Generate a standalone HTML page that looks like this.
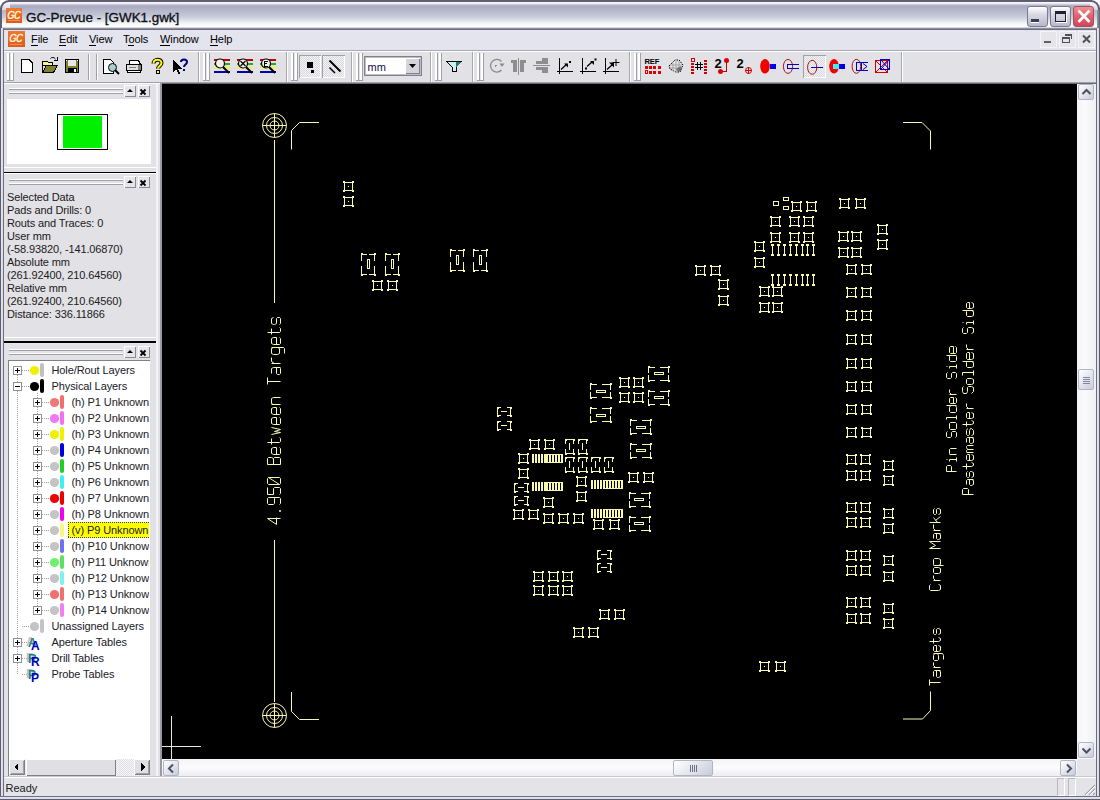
<!DOCTYPE html>
<html><head><meta charset="utf-8">
<style>
*{margin:0;padding:0;box-sizing:border-box}
html,body{width:1100px;height:800px;overflow:hidden;background:#E0DFE3;font-family:"Liberation Sans",sans-serif;font-size:11px;color:#000}
.a{position:absolute}
#title{left:0;top:0;width:1100px;height:30px;background:linear-gradient(#5F5E70 0,#5F5E70 1.5px,#F8F8FC 2px,#F8F8FC 3px,#D8D8E6 4px,#A8A8BE 6px,#B4B6CA 10px,#C4C8D8 16px,#DCDFE6 20px,#F0F4F2 23px,#FFFFFF 26px,#FFFFFF 27px,#B0B0C0 28px,#6E6E80 29px,#6E6E80 30px)}
#frameL{z-index:5;left:0;top:28px;width:4px;height:772px;background:linear-gradient(90deg,#5E5E72 0,#5E5E72 1px,#E6E6EE 1px,#D8D8E2 3px,#6E6E80 3px)}
#frameR{z-index:5;left:1096px;top:28px;width:4px;height:772px;background:linear-gradient(90deg,#6E6E80 0,#6E6E80 1px,#E6E6EE 1px,#D8D8E2 3px,#5E5E72 3px)}
#frameB{z-index:5;left:0;top:796px;width:1100px;height:4px;background:linear-gradient(#6E6E80 0,#6E6E80 1px,#E6E6EE 1px,#D8D8E2 3px,#5E5E72 3px)}
#menubar{left:4px;top:30px;width:1092px;height:20px;background:#E3E4EE}
.menu{top:33px;font-size:11px;color:#000;letter-spacing:-0.1px}
.menu u{text-decoration:none;border-bottom:1px solid #000}
#tbline{left:4px;top:50px;width:1092px;height:1px;background:#A8A8B4}
#tbwhite{left:4px;top:51px;width:1092px;height:1px;background:#FFFFFF}
#toolbar{left:4px;top:52px;width:1092px;height:30px;background:#E2E1E6}
#tbbottom{left:4px;top:82px;width:1092px;height:1px;background:#A0A0AC}
.grip{top:53px;width:7px;height:27px;border-left:1px solid #fff;border-right:1px solid #fff}
.grip:before{content:"";position:absolute;left:1px;top:0;width:1px;height:27px;background:#A8A8B0}
.grip:after{content:"";position:absolute;left:5px;top:0;width:1px;height:27px;background:#A8A8B0}
.tbend{top:53px;width:2px;height:28px;border-left:1px solid #B0B0B8;border-right:1px solid #fff}
#canvas{left:162px;top:84px;width:915px;height:675px;background:#000;overflow:hidden}
#status{left:4px;top:777px;width:1092px;height:20px;background:#E3E3E8;border-top:1px solid #FFFFFF}

.gc{background:linear-gradient(#F07830,#E05818);overflow:hidden}
.gc span{position:absolute;left:2px;top:0px;font:italic bold 12px "Liberation Sans",sans-serif;color:#FFF2D0;letter-spacing:-1px;transform:scaleX(0.8) skewX(-8deg);transform-origin:0 0}
.gc:after{content:"";position:absolute;left:2px;bottom:2px;width:12px;height:1px;background:#F09060}
.tbtn{width:21px;height:21px;border-radius:3px;border:1px solid #7A7A90;background:linear-gradient(#FFFFFF,#D8D8E4 40%,#B8B8CC)}
.close{background:linear-gradient(#F09090,#E06070 50%,#D04858);border-color:#A05060}
.mdib{top:31px;width:17px;height:17px;background:#E6E6EA;border:1px solid #F4F4F6}
.tr{font-size:11px;line-height:14px;color:#202028;white-space:nowrap;letter-spacing:-0.1px}
.sbtn{width:16px;height:16px;border:1px solid #B0B4C4;border-radius:2px;background:linear-gradient(135deg,#FFFFFF,#E4E6EE 50%,#C8CCDA)}
</style></head><body>
<div class="a" id="title"></div>
<div class="a" id="frameL"></div>
<div class="a" style="left:0;top:8px;width:2px;height:20px;background:#5F5E70"></div>
<div class="a" style="left:1097px;top:8px;width:3px;height:20px;background:linear-gradient(90deg,#9A9AAC,#5F5E70)"></div>
<div class="a" id="frameR"></div>
<div class="a" id="frameB"></div>
<div class="a" id="menubar"></div>
<div class="a" id="tbline"></div>
<div class="a" id="tbwhite"></div>
<div class="a" id="toolbar"></div>
<div class="a" id="tbbottom"></div>
<div class="a" style="left:160px;top:83px;width:936px;height:1px;background:#6A6A72"></div>
<div class="a" id="canvas"></div>
<!-- canvas -->
<div class="a" style="left:162px;top:84px;width:915px;height:675px;overflow:hidden"><div class="a" style="left:-162px;top:-84px;width:1100px;height:800px"><svg class="a" style="left:0;top:0" width="1100" height="800"><g fill="none" stroke="#F8F8B0" stroke-width="1.2" shape-rendering="crispEdges"><rect x="344.5" y="182.5" width="8" height="8"/>
<path d="M348 186h1.2v1.2h-1.2z" fill="#F8F8B0" stroke="none"/>
<path d="M343 181h2v2h-2zM352 181h2v2h-2zM343 190h2v2h-2zM352 190h2v2h-2z" fill="#F8F8B0" stroke="none"/>
<rect x="344.5" y="197.5" width="8" height="8"/>
<path d="M348 201h1.2v1.2h-1.2z" fill="#F8F8B0" stroke="none"/>
<path d="M343 196h2v2h-2zM352 196h2v2h-2zM343 205h2v2h-2zM352 205h2v2h-2z" fill="#F8F8B0" stroke="none"/>
<path d="M361.5 260.6V254.5H366.5M368.5 254.5H374.5V260.6M361.5 266.4V274.5H366.5M368.5 274.5H374.5V266.4"/>
<rect x="367.5" y="259.5" width="2" height="9"/>
<path d="M361 254h1.5M374 254h1.5M361 275h1.5M374 275h1.5" stroke-width="1.6"/>
<path d="M385.5 260.6V254.5H390.5M392.5 254.5H398.5V260.6M385.5 266.4V274.5H390.5M392.5 274.5H398.5V266.4"/>
<rect x="391.5" y="259.5" width="2" height="9"/>
<path d="M385 254h1.5M398 254h1.5M385 275h1.5M398 275h1.5" stroke-width="1.6"/>
<rect x="373.5" y="281.5" width="8" height="8"/>
<path d="M377 285h1.2v1.2h-1.2z" fill="#F8F8B0" stroke="none"/>
<path d="M372 280h2v2h-2zM381 280h2v2h-2zM372 289h2v2h-2zM381 289h2v2h-2z" fill="#F8F8B0" stroke="none"/>
<rect x="388.5" y="281.5" width="8" height="8"/>
<path d="M392 285h1.2v1.2h-1.2z" fill="#F8F8B0" stroke="none"/>
<path d="M387 280h2v2h-2zM396 280h2v2h-2zM387 289h2v2h-2zM396 289h2v2h-2z" fill="#F8F8B0" stroke="none"/>
<path d="M450.5 256.6V250.5H455.5M457.5 250.5H463.5V256.6M450.5 262.4V270.5H455.5M457.5 270.5H463.5V262.4"/>
<rect x="456.5" y="255.5" width="2" height="9"/>
<path d="M450 250h1.5M463 250h1.5M450 271h1.5M463 271h1.5" stroke-width="1.6"/>
<path d="M473.5 256.6V250.5H478.5M480.5 250.5H486.5V256.6M473.5 262.4V270.5H478.5M480.5 270.5H486.5V262.4"/>
<rect x="479.5" y="255.5" width="2" height="9"/>
<path d="M473 250h1.5M486 250h1.5M473 271h1.5M486 271h1.5" stroke-width="1.6"/>
<rect x="696.5" y="266.5" width="8" height="8"/>
<path d="M700 270h1.2v1.2h-1.2z" fill="#F8F8B0" stroke="none"/>
<path d="M695 265h2v2h-2zM704 265h2v2h-2zM695 274h2v2h-2zM704 274h2v2h-2z" fill="#F8F8B0" stroke="none"/>
<rect x="711.5" y="266.5" width="8" height="8"/>
<path d="M715 270h1.2v1.2h-1.2z" fill="#F8F8B0" stroke="none"/>
<path d="M710 265h2v2h-2zM719 265h2v2h-2zM710 274h2v2h-2zM719 274h2v2h-2z" fill="#F8F8B0" stroke="none"/>
<rect x="719.5" y="280.5" width="8" height="8"/>
<path d="M723 284h1.2v1.2h-1.2z" fill="#F8F8B0" stroke="none"/>
<path d="M718 279h2v2h-2zM727 279h2v2h-2zM718 288h2v2h-2zM727 288h2v2h-2z" fill="#F8F8B0" stroke="none"/>
<rect x="719.5" y="296.5" width="8" height="8"/>
<path d="M723 300h1.2v1.2h-1.2z" fill="#F8F8B0" stroke="none"/>
<path d="M718 295h2v2h-2zM727 295h2v2h-2zM718 304h2v2h-2zM727 304h2v2h-2z" fill="#F8F8B0" stroke="none"/>
<rect x="773.5" y="201.5" width="5" height="4"/>
<rect x="783.5" y="197.5" width="5" height="3"/>
<rect x="783.5" y="206.5" width="5" height="3"/>
<rect x="792.5" y="202.5" width="8" height="8"/>
<path d="M796 206h1.2v1.2h-1.2z" fill="#F8F8B0" stroke="none"/>
<path d="M791 201h2v2h-2zM800 201h2v2h-2zM791 210h2v2h-2zM800 210h2v2h-2z" fill="#F8F8B0" stroke="none"/>
<rect x="807.5" y="202.5" width="8" height="8"/>
<path d="M811 206h1.2v1.2h-1.2z" fill="#F8F8B0" stroke="none"/>
<path d="M806 201h2v2h-2zM815 201h2v2h-2zM806 210h2v2h-2zM815 210h2v2h-2z" fill="#F8F8B0" stroke="none"/>
<rect x="771.5" y="217.5" width="8" height="8"/>
<path d="M775 221h1.2v1.2h-1.2z" fill="#F8F8B0" stroke="none"/>
<path d="M770 216h2v2h-2zM779 216h2v2h-2zM770 225h2v2h-2zM779 225h2v2h-2z" fill="#F8F8B0" stroke="none"/>
<rect x="790.5" y="217.5" width="8" height="8"/>
<path d="M794 221h1.2v1.2h-1.2z" fill="#F8F8B0" stroke="none"/>
<path d="M789 216h2v2h-2zM798 216h2v2h-2zM789 225h2v2h-2zM798 225h2v2h-2z" fill="#F8F8B0" stroke="none"/>
<rect x="804.5" y="217.5" width="8" height="8"/>
<path d="M808 221h1.2v1.2h-1.2z" fill="#F8F8B0" stroke="none"/>
<path d="M803 216h2v2h-2zM812 216h2v2h-2zM803 225h2v2h-2zM812 225h2v2h-2z" fill="#F8F8B0" stroke="none"/>
<rect x="771.5" y="233.5" width="8" height="8"/>
<path d="M775 237h1.2v1.2h-1.2z" fill="#F8F8B0" stroke="none"/>
<path d="M770 232h2v2h-2zM779 232h2v2h-2zM770 241h2v2h-2zM779 241h2v2h-2z" fill="#F8F8B0" stroke="none"/>
<rect x="790.5" y="233.5" width="8" height="8"/>
<path d="M794 237h1.2v1.2h-1.2z" fill="#F8F8B0" stroke="none"/>
<path d="M789 232h2v2h-2zM798 232h2v2h-2zM789 241h2v2h-2zM798 241h2v2h-2z" fill="#F8F8B0" stroke="none"/>
<rect x="804.5" y="233.5" width="8" height="8"/>
<path d="M808 237h1.2v1.2h-1.2z" fill="#F8F8B0" stroke="none"/>
<path d="M803 232h2v2h-2zM812 232h2v2h-2zM803 241h2v2h-2zM812 241h2v2h-2z" fill="#F8F8B0" stroke="none"/>
<rect x="755.5" y="242.5" width="8" height="8"/>
<path d="M759 246h1.2v1.2h-1.2z" fill="#F8F8B0" stroke="none"/>
<path d="M754 241h2v2h-2zM763 241h2v2h-2zM754 250h2v2h-2zM763 250h2v2h-2z" fill="#F8F8B0" stroke="none"/>
<rect x="755.5" y="258.5" width="8" height="8"/>
<path d="M759 262h1.2v1.2h-1.2z" fill="#F8F8B0" stroke="none"/>
<path d="M754 257h2v2h-2zM763 257h2v2h-2zM754 266h2v2h-2zM763 266h2v2h-2z" fill="#F8F8B0" stroke="none"/>
<path d="M771 244h3v2h-3zM772 244h1.3v11h-1.3zM771 254h3v2h-3z" fill="#F8F8B0" stroke="none"/>
<path d="M777 244h3v2h-3zM778 244h1.3v11h-1.3zM777 254h3v2h-3z" fill="#F8F8B0" stroke="none"/>
<path d="M783 244h3v2h-3zM784 244h1.3v11h-1.3zM783 254h3v2h-3z" fill="#F8F8B0" stroke="none"/>
<path d="M789 244h3v2h-3zM790 244h1.3v11h-1.3zM789 254h3v2h-3z" fill="#F8F8B0" stroke="none"/>
<path d="M795 244h3v2h-3zM796 244h1.3v11h-1.3zM795 254h3v2h-3z" fill="#F8F8B0" stroke="none"/>
<path d="M801 244h3v2h-3zM802 244h1.3v11h-1.3zM801 254h3v2h-3z" fill="#F8F8B0" stroke="none"/>
<path d="M806 244h3v2h-3zM807 244h1.3v11h-1.3zM806 254h3v2h-3z" fill="#F8F8B0" stroke="none"/>
<path d="M812 244h3v2h-3zM813 244h1.3v11h-1.3zM812 254h3v2h-3z" fill="#F8F8B0" stroke="none"/>
<path d="M771 274h3v2h-3zM772 274h1.3v11h-1.3zM771 284h3v2h-3z" fill="#F8F8B0" stroke="none"/>
<path d="M777 274h3v2h-3zM778 274h1.3v11h-1.3zM777 284h3v2h-3z" fill="#F8F8B0" stroke="none"/>
<path d="M783 274h3v2h-3zM784 274h1.3v11h-1.3zM783 284h3v2h-3z" fill="#F8F8B0" stroke="none"/>
<path d="M789 274h3v2h-3zM790 274h1.3v11h-1.3zM789 284h3v2h-3z" fill="#F8F8B0" stroke="none"/>
<path d="M795 274h3v2h-3zM796 274h1.3v11h-1.3zM795 284h3v2h-3z" fill="#F8F8B0" stroke="none"/>
<path d="M801 274h3v2h-3zM802 274h1.3v11h-1.3zM801 284h3v2h-3z" fill="#F8F8B0" stroke="none"/>
<path d="M806 274h3v2h-3zM807 274h1.3v11h-1.3zM806 284h3v2h-3z" fill="#F8F8B0" stroke="none"/>
<path d="M812 274h3v2h-3zM813 274h1.3v11h-1.3zM812 284h3v2h-3z" fill="#F8F8B0" stroke="none"/>
<rect x="760.5" y="287.5" width="8" height="8"/>
<path d="M764 291h1.2v1.2h-1.2z" fill="#F8F8B0" stroke="none"/>
<path d="M759 286h2v2h-2zM768 286h2v2h-2zM759 295h2v2h-2zM768 295h2v2h-2z" fill="#F8F8B0" stroke="none"/>
<rect x="773.5" y="287.5" width="8" height="8"/>
<path d="M777 291h1.2v1.2h-1.2z" fill="#F8F8B0" stroke="none"/>
<path d="M772 286h2v2h-2zM781 286h2v2h-2zM772 295h2v2h-2zM781 295h2v2h-2z" fill="#F8F8B0" stroke="none"/>
<rect x="760.5" y="303.5" width="8" height="8"/>
<path d="M764 307h1.2v1.2h-1.2z" fill="#F8F8B0" stroke="none"/>
<path d="M759 302h2v2h-2zM768 302h2v2h-2zM759 311h2v2h-2zM768 311h2v2h-2z" fill="#F8F8B0" stroke="none"/>
<rect x="773.5" y="303.5" width="8" height="8"/>
<path d="M777 307h1.2v1.2h-1.2z" fill="#F8F8B0" stroke="none"/>
<path d="M772 302h2v2h-2zM781 302h2v2h-2zM772 311h2v2h-2zM781 311h2v2h-2z" fill="#F8F8B0" stroke="none"/>
<rect x="840.5" y="199.5" width="8" height="8"/>
<path d="M844 203h1.2v1.2h-1.2z" fill="#F8F8B0" stroke="none"/>
<path d="M839 198h2v2h-2zM848 198h2v2h-2zM839 207h2v2h-2zM848 207h2v2h-2z" fill="#F8F8B0" stroke="none"/>
<rect x="856.5" y="199.5" width="8" height="8"/>
<path d="M860 203h1.2v1.2h-1.2z" fill="#F8F8B0" stroke="none"/>
<path d="M855 198h2v2h-2zM864 198h2v2h-2zM855 207h2v2h-2zM864 207h2v2h-2z" fill="#F8F8B0" stroke="none"/>
<rect x="839.5" y="232.5" width="8" height="8"/>
<path d="M843 236h1.2v1.2h-1.2z" fill="#F8F8B0" stroke="none"/>
<path d="M838 231h2v2h-2zM847 231h2v2h-2zM838 240h2v2h-2zM847 240h2v2h-2z" fill="#F8F8B0" stroke="none"/>
<rect x="852.5" y="232.5" width="8" height="8"/>
<path d="M856 236h1.2v1.2h-1.2z" fill="#F8F8B0" stroke="none"/>
<path d="M851 231h2v2h-2zM860 231h2v2h-2zM851 240h2v2h-2zM860 240h2v2h-2z" fill="#F8F8B0" stroke="none"/>
<rect x="839.5" y="248.5" width="8" height="8"/>
<path d="M843 252h1.2v1.2h-1.2z" fill="#F8F8B0" stroke="none"/>
<path d="M838 247h2v2h-2zM847 247h2v2h-2zM838 256h2v2h-2zM847 256h2v2h-2z" fill="#F8F8B0" stroke="none"/>
<rect x="852.5" y="248.5" width="8" height="8"/>
<path d="M856 252h1.2v1.2h-1.2z" fill="#F8F8B0" stroke="none"/>
<path d="M851 247h2v2h-2zM860 247h2v2h-2zM851 256h2v2h-2zM860 256h2v2h-2z" fill="#F8F8B0" stroke="none"/>
<rect x="878.5" y="225.5" width="8" height="8"/>
<path d="M882 229h1.2v1.2h-1.2z" fill="#F8F8B0" stroke="none"/>
<path d="M877 224h2v2h-2zM886 224h2v2h-2zM877 233h2v2h-2zM886 233h2v2h-2z" fill="#F8F8B0" stroke="none"/>
<rect x="878.5" y="240.5" width="8" height="8"/>
<path d="M882 244h1.2v1.2h-1.2z" fill="#F8F8B0" stroke="none"/>
<path d="M877 239h2v2h-2zM886 239h2v2h-2zM877 248h2v2h-2zM886 248h2v2h-2z" fill="#F8F8B0" stroke="none"/>
<rect x="847.5" y="265.5" width="8" height="8"/>
<path d="M851 269h1.2v1.2h-1.2z" fill="#F8F8B0" stroke="none"/>
<path d="M846 264h2v2h-2zM855 264h2v2h-2zM846 273h2v2h-2zM855 273h2v2h-2z" fill="#F8F8B0" stroke="none"/>
<rect x="862.5" y="265.5" width="8" height="8"/>
<path d="M866 269h1.2v1.2h-1.2z" fill="#F8F8B0" stroke="none"/>
<path d="M861 264h2v2h-2zM870 264h2v2h-2zM861 273h2v2h-2zM870 273h2v2h-2z" fill="#F8F8B0" stroke="none"/>
<rect x="847.5" y="288.5" width="8" height="8"/>
<path d="M851 292h1.2v1.2h-1.2z" fill="#F8F8B0" stroke="none"/>
<path d="M846 287h2v2h-2zM855 287h2v2h-2zM846 296h2v2h-2zM855 296h2v2h-2z" fill="#F8F8B0" stroke="none"/>
<rect x="862.5" y="288.5" width="8" height="8"/>
<path d="M866 292h1.2v1.2h-1.2z" fill="#F8F8B0" stroke="none"/>
<path d="M861 287h2v2h-2zM870 287h2v2h-2zM861 296h2v2h-2zM870 296h2v2h-2z" fill="#F8F8B0" stroke="none"/>
<rect x="847.5" y="311.5" width="8" height="8"/>
<path d="M851 315h1.2v1.2h-1.2z" fill="#F8F8B0" stroke="none"/>
<path d="M846 310h2v2h-2zM855 310h2v2h-2zM846 319h2v2h-2zM855 319h2v2h-2z" fill="#F8F8B0" stroke="none"/>
<rect x="862.5" y="311.5" width="8" height="8"/>
<path d="M866 315h1.2v1.2h-1.2z" fill="#F8F8B0" stroke="none"/>
<path d="M861 310h2v2h-2zM870 310h2v2h-2zM861 319h2v2h-2zM870 319h2v2h-2z" fill="#F8F8B0" stroke="none"/>
<rect x="847.5" y="335.5" width="8" height="8"/>
<path d="M851 339h1.2v1.2h-1.2z" fill="#F8F8B0" stroke="none"/>
<path d="M846 334h2v2h-2zM855 334h2v2h-2zM846 343h2v2h-2zM855 343h2v2h-2z" fill="#F8F8B0" stroke="none"/>
<rect x="862.5" y="335.5" width="8" height="8"/>
<path d="M866 339h1.2v1.2h-1.2z" fill="#F8F8B0" stroke="none"/>
<path d="M861 334h2v2h-2zM870 334h2v2h-2zM861 343h2v2h-2zM870 343h2v2h-2z" fill="#F8F8B0" stroke="none"/>
<rect x="847.5" y="359.5" width="8" height="8"/>
<path d="M851 363h1.2v1.2h-1.2z" fill="#F8F8B0" stroke="none"/>
<path d="M846 358h2v2h-2zM855 358h2v2h-2zM846 367h2v2h-2zM855 367h2v2h-2z" fill="#F8F8B0" stroke="none"/>
<rect x="862.5" y="359.5" width="8" height="8"/>
<path d="M866 363h1.2v1.2h-1.2z" fill="#F8F8B0" stroke="none"/>
<path d="M861 358h2v2h-2zM870 358h2v2h-2zM861 367h2v2h-2zM870 367h2v2h-2z" fill="#F8F8B0" stroke="none"/>
<rect x="847.5" y="382.5" width="8" height="8"/>
<path d="M851 386h1.2v1.2h-1.2z" fill="#F8F8B0" stroke="none"/>
<path d="M846 381h2v2h-2zM855 381h2v2h-2zM846 390h2v2h-2zM855 390h2v2h-2z" fill="#F8F8B0" stroke="none"/>
<rect x="862.5" y="382.5" width="8" height="8"/>
<path d="M866 386h1.2v1.2h-1.2z" fill="#F8F8B0" stroke="none"/>
<path d="M861 381h2v2h-2zM870 381h2v2h-2zM861 390h2v2h-2zM870 390h2v2h-2z" fill="#F8F8B0" stroke="none"/>
<rect x="847.5" y="405.5" width="8" height="8"/>
<path d="M851 409h1.2v1.2h-1.2z" fill="#F8F8B0" stroke="none"/>
<path d="M846 404h2v2h-2zM855 404h2v2h-2zM846 413h2v2h-2zM855 413h2v2h-2z" fill="#F8F8B0" stroke="none"/>
<rect x="862.5" y="405.5" width="8" height="8"/>
<path d="M866 409h1.2v1.2h-1.2z" fill="#F8F8B0" stroke="none"/>
<path d="M861 404h2v2h-2zM870 404h2v2h-2zM861 413h2v2h-2zM870 413h2v2h-2z" fill="#F8F8B0" stroke="none"/>
<rect x="847.5" y="428.5" width="8" height="8"/>
<path d="M851 432h1.2v1.2h-1.2z" fill="#F8F8B0" stroke="none"/>
<path d="M846 427h2v2h-2zM855 427h2v2h-2zM846 436h2v2h-2zM855 436h2v2h-2z" fill="#F8F8B0" stroke="none"/>
<rect x="862.5" y="428.5" width="8" height="8"/>
<path d="M866 432h1.2v1.2h-1.2z" fill="#F8F8B0" stroke="none"/>
<path d="M861 427h2v2h-2zM870 427h2v2h-2zM861 436h2v2h-2zM870 436h2v2h-2z" fill="#F8F8B0" stroke="none"/>
<rect x="847.5" y="455.5" width="8" height="8"/>
<path d="M851 459h1.2v1.2h-1.2z" fill="#F8F8B0" stroke="none"/>
<path d="M846 454h2v2h-2zM855 454h2v2h-2zM846 463h2v2h-2zM855 463h2v2h-2z" fill="#F8F8B0" stroke="none"/>
<rect x="861.5" y="455.5" width="8" height="8"/>
<path d="M865 459h1.2v1.2h-1.2z" fill="#F8F8B0" stroke="none"/>
<path d="M860 454h2v2h-2zM869 454h2v2h-2zM860 463h2v2h-2zM869 463h2v2h-2z" fill="#F8F8B0" stroke="none"/>
<rect x="847.5" y="471.5" width="8" height="8"/>
<path d="M851 475h1.2v1.2h-1.2z" fill="#F8F8B0" stroke="none"/>
<path d="M846 470h2v2h-2zM855 470h2v2h-2zM846 479h2v2h-2zM855 479h2v2h-2z" fill="#F8F8B0" stroke="none"/>
<rect x="861.5" y="471.5" width="8" height="8"/>
<path d="M865 475h1.2v1.2h-1.2z" fill="#F8F8B0" stroke="none"/>
<path d="M860 470h2v2h-2zM869 470h2v2h-2zM860 479h2v2h-2zM869 479h2v2h-2z" fill="#F8F8B0" stroke="none"/>
<rect x="884.5" y="461.5" width="8" height="8"/>
<path d="M888 465h1.2v1.2h-1.2z" fill="#F8F8B0" stroke="none"/>
<path d="M883 460h2v2h-2zM892 460h2v2h-2zM883 469h2v2h-2zM892 469h2v2h-2z" fill="#F8F8B0" stroke="none"/>
<rect x="884.5" y="476.5" width="8" height="8"/>
<path d="M888 480h1.2v1.2h-1.2z" fill="#F8F8B0" stroke="none"/>
<path d="M883 475h2v2h-2zM892 475h2v2h-2zM883 484h2v2h-2zM892 484h2v2h-2z" fill="#F8F8B0" stroke="none"/>
<rect x="847.5" y="503.5" width="8" height="8"/>
<path d="M851 507h1.2v1.2h-1.2z" fill="#F8F8B0" stroke="none"/>
<path d="M846 502h2v2h-2zM855 502h2v2h-2zM846 511h2v2h-2zM855 511h2v2h-2z" fill="#F8F8B0" stroke="none"/>
<rect x="861.5" y="503.5" width="8" height="8"/>
<path d="M865 507h1.2v1.2h-1.2z" fill="#F8F8B0" stroke="none"/>
<path d="M860 502h2v2h-2zM869 502h2v2h-2zM860 511h2v2h-2zM869 511h2v2h-2z" fill="#F8F8B0" stroke="none"/>
<rect x="847.5" y="518.5" width="8" height="8"/>
<path d="M851 522h1.2v1.2h-1.2z" fill="#F8F8B0" stroke="none"/>
<path d="M846 517h2v2h-2zM855 517h2v2h-2zM846 526h2v2h-2zM855 526h2v2h-2z" fill="#F8F8B0" stroke="none"/>
<rect x="861.5" y="518.5" width="8" height="8"/>
<path d="M865 522h1.2v1.2h-1.2z" fill="#F8F8B0" stroke="none"/>
<path d="M860 517h2v2h-2zM869 517h2v2h-2zM860 526h2v2h-2zM869 526h2v2h-2z" fill="#F8F8B0" stroke="none"/>
<rect x="884.5" y="509.5" width="8" height="8"/>
<path d="M888 513h1.2v1.2h-1.2z" fill="#F8F8B0" stroke="none"/>
<path d="M883 508h2v2h-2zM892 508h2v2h-2zM883 517h2v2h-2zM892 517h2v2h-2z" fill="#F8F8B0" stroke="none"/>
<rect x="884.5" y="524.5" width="8" height="8"/>
<path d="M888 528h1.2v1.2h-1.2z" fill="#F8F8B0" stroke="none"/>
<path d="M883 523h2v2h-2zM892 523h2v2h-2zM883 532h2v2h-2zM892 532h2v2h-2z" fill="#F8F8B0" stroke="none"/>
<rect x="847.5" y="551.5" width="8" height="8"/>
<path d="M851 555h1.2v1.2h-1.2z" fill="#F8F8B0" stroke="none"/>
<path d="M846 550h2v2h-2zM855 550h2v2h-2zM846 559h2v2h-2zM855 559h2v2h-2z" fill="#F8F8B0" stroke="none"/>
<rect x="861.5" y="551.5" width="8" height="8"/>
<path d="M865 555h1.2v1.2h-1.2z" fill="#F8F8B0" stroke="none"/>
<path d="M860 550h2v2h-2zM869 550h2v2h-2zM860 559h2v2h-2zM869 559h2v2h-2z" fill="#F8F8B0" stroke="none"/>
<rect x="847.5" y="566.5" width="8" height="8"/>
<path d="M851 570h1.2v1.2h-1.2z" fill="#F8F8B0" stroke="none"/>
<path d="M846 565h2v2h-2zM855 565h2v2h-2zM846 574h2v2h-2zM855 574h2v2h-2z" fill="#F8F8B0" stroke="none"/>
<rect x="861.5" y="566.5" width="8" height="8"/>
<path d="M865 570h1.2v1.2h-1.2z" fill="#F8F8B0" stroke="none"/>
<path d="M860 565h2v2h-2zM869 565h2v2h-2zM860 574h2v2h-2zM869 574h2v2h-2z" fill="#F8F8B0" stroke="none"/>
<rect x="884.5" y="556.5" width="8" height="8"/>
<path d="M888 560h1.2v1.2h-1.2z" fill="#F8F8B0" stroke="none"/>
<path d="M883 555h2v2h-2zM892 555h2v2h-2zM883 564h2v2h-2zM892 564h2v2h-2z" fill="#F8F8B0" stroke="none"/>
<rect x="884.5" y="572.5" width="8" height="8"/>
<path d="M888 576h1.2v1.2h-1.2z" fill="#F8F8B0" stroke="none"/>
<path d="M883 571h2v2h-2zM892 571h2v2h-2zM883 580h2v2h-2zM892 580h2v2h-2z" fill="#F8F8B0" stroke="none"/>
<rect x="847.5" y="598.5" width="8" height="8"/>
<path d="M851 602h1.2v1.2h-1.2z" fill="#F8F8B0" stroke="none"/>
<path d="M846 597h2v2h-2zM855 597h2v2h-2zM846 606h2v2h-2zM855 606h2v2h-2z" fill="#F8F8B0" stroke="none"/>
<rect x="861.5" y="598.5" width="8" height="8"/>
<path d="M865 602h1.2v1.2h-1.2z" fill="#F8F8B0" stroke="none"/>
<path d="M860 597h2v2h-2zM869 597h2v2h-2zM860 606h2v2h-2zM869 606h2v2h-2z" fill="#F8F8B0" stroke="none"/>
<rect x="847.5" y="614.5" width="8" height="8"/>
<path d="M851 618h1.2v1.2h-1.2z" fill="#F8F8B0" stroke="none"/>
<path d="M846 613h2v2h-2zM855 613h2v2h-2zM846 622h2v2h-2zM855 622h2v2h-2z" fill="#F8F8B0" stroke="none"/>
<rect x="861.5" y="614.5" width="8" height="8"/>
<path d="M865 618h1.2v1.2h-1.2z" fill="#F8F8B0" stroke="none"/>
<path d="M860 613h2v2h-2zM869 613h2v2h-2zM860 622h2v2h-2zM869 622h2v2h-2z" fill="#F8F8B0" stroke="none"/>
<rect x="884.5" y="604.5" width="8" height="8"/>
<path d="M888 608h1.2v1.2h-1.2z" fill="#F8F8B0" stroke="none"/>
<path d="M883 603h2v2h-2zM892 603h2v2h-2zM883 612h2v2h-2zM892 612h2v2h-2z" fill="#F8F8B0" stroke="none"/>
<rect x="884.5" y="619.5" width="8" height="8"/>
<path d="M888 623h1.2v1.2h-1.2z" fill="#F8F8B0" stroke="none"/>
<path d="M883 618h2v2h-2zM892 618h2v2h-2zM883 627h2v2h-2zM892 627h2v2h-2z" fill="#F8F8B0" stroke="none"/>
<rect x="760.5" y="662.5" width="8" height="8"/>
<path d="M764 666h1.2v1.2h-1.2z" fill="#F8F8B0" stroke="none"/>
<path d="M759 661h2v2h-2zM768 661h2v2h-2zM759 670h2v2h-2zM768 670h2v2h-2z" fill="#F8F8B0" stroke="none"/>
<rect x="776.5" y="662.5" width="8" height="8"/>
<path d="M780 666h1.2v1.2h-1.2z" fill="#F8F8B0" stroke="none"/>
<path d="M775 661h2v2h-2zM784 661h2v2h-2zM775 670h2v2h-2zM784 670h2v2h-2z" fill="#F8F8B0" stroke="none"/>
<path d="M501 407.5H497.5V415.5H501M507 407.5H510.5V415.5H507M501 411.5H507"/>
<path d="M496.5 406.5h2v2h-2zM509.5 406.5h2v2h-2zM496.5 414.5h2v2h-2zM509.5 414.5h2v2h-2z" fill="#F8F8B0" stroke="none"/>
<path d="M501 421.5H497.5V429.5H501M507 421.5H510.5V429.5H507M501 425.5H507"/>
<path d="M496.5 420.5h2v2h-2zM509.5 420.5h2v2h-2zM496.5 428.5h2v2h-2zM509.5 428.5h2v2h-2z" fill="#F8F8B0" stroke="none"/>
<path d="M596.6 384.5H590.5V389.5M590.5 391.5V397.5H596.6M602.4 384.5H610.5V389.5M610.5 391.5V397.5H602.4"/>
<rect x="596.5" y="390.5" width="9" height="2"/>
<path d="M590 384h1.5M610 384h1.5M590 398h1.5M610 398h1.5" stroke-width="1.6"/>
<path d="M596.6 408.5H590.5V413.5M590.5 415.5V421.5H596.6M602.4 408.5H610.5V413.5M610.5 415.5V421.5H602.4"/>
<rect x="596.5" y="414.5" width="9" height="2"/>
<path d="M590 408h1.5M610 408h1.5M590 422h1.5M610 422h1.5" stroke-width="1.6"/>
<rect x="620.5" y="378.5" width="8" height="8"/>
<path d="M624 382h1.2v1.2h-1.2z" fill="#F8F8B0" stroke="none"/>
<path d="M619 377h2v2h-2zM628 377h2v2h-2zM619 386h2v2h-2zM628 386h2v2h-2z" fill="#F8F8B0" stroke="none"/>
<rect x="634.5" y="378.5" width="8" height="8"/>
<path d="M638 382h1.2v1.2h-1.2z" fill="#F8F8B0" stroke="none"/>
<path d="M633 377h2v2h-2zM642 377h2v2h-2zM633 386h2v2h-2zM642 386h2v2h-2z" fill="#F8F8B0" stroke="none"/>
<rect x="620.5" y="393.5" width="8" height="8"/>
<path d="M624 397h1.2v1.2h-1.2z" fill="#F8F8B0" stroke="none"/>
<path d="M619 392h2v2h-2zM628 392h2v2h-2zM619 401h2v2h-2zM628 401h2v2h-2z" fill="#F8F8B0" stroke="none"/>
<rect x="634.5" y="393.5" width="8" height="8"/>
<path d="M638 397h1.2v1.2h-1.2z" fill="#F8F8B0" stroke="none"/>
<path d="M633 392h2v2h-2zM642 392h2v2h-2zM633 401h2v2h-2zM642 401h2v2h-2z" fill="#F8F8B0" stroke="none"/>
<path d="M654.6 367.5H648.5V372.5M648.5 374.5V380.5H654.6M660.4 367.5H668.5V372.5M668.5 374.5V380.5H660.4"/>
<rect x="654.5" y="372.5" width="9" height="2"/>
<path d="M648 367h1.5M668 367h1.5M648 381h1.5M668 381h1.5" stroke-width="1.6"/>
<path d="M654.6 391.5H648.5V396.5M648.5 398.5V404.5H654.6M660.4 391.5H668.5V396.5M668.5 398.5V404.5H660.4"/>
<rect x="654.5" y="396.5" width="9" height="2"/>
<path d="M648 391h1.5M668 391h1.5M648 405h1.5M668 405h1.5" stroke-width="1.6"/>
<path d="M636.6 420.5H630.5V425.5M630.5 427.5V433.5H636.6M642.4 420.5H650.5V425.5M650.5 427.5V433.5H642.4"/>
<rect x="636.5" y="426.5" width="9" height="2"/>
<path d="M630 420h1.5M650 420h1.5M630 434h1.5M650 434h1.5" stroke-width="1.6"/>
<path d="M636.6 444.5H630.5V449.5M630.5 451.5V457.5H636.6M642.4 444.5H650.5V449.5M650.5 451.5V457.5H642.4"/>
<rect x="636.5" y="449.5" width="9" height="2"/>
<path d="M630 444h1.5M650 444h1.5M630 458h1.5M650 458h1.5" stroke-width="1.6"/>
<rect x="530.5" y="440.5" width="8" height="8"/>
<path d="M534 444h1.2v1.2h-1.2z" fill="#F8F8B0" stroke="none"/>
<path d="M529 439h2v2h-2zM538 439h2v2h-2zM529 448h2v2h-2zM538 448h2v2h-2z" fill="#F8F8B0" stroke="none"/>
<rect x="545.5" y="440.5" width="8" height="8"/>
<path d="M549 444h1.2v1.2h-1.2z" fill="#F8F8B0" stroke="none"/>
<path d="M544 439h2v2h-2zM553 439h2v2h-2zM544 448h2v2h-2zM553 448h2v2h-2z" fill="#F8F8B0" stroke="none"/>
<rect x="519.5" y="454.5" width="8" height="8"/>
<path d="M523 458h1.2v1.2h-1.2z" fill="#F8F8B0" stroke="none"/>
<path d="M518 453h2v2h-2zM527 453h2v2h-2zM518 462h2v2h-2zM527 462h2v2h-2z" fill="#F8F8B0" stroke="none"/>
<rect x="519.5" y="469.5" width="8" height="8"/>
<path d="M523 473h1.2v1.2h-1.2z" fill="#F8F8B0" stroke="none"/>
<path d="M518 468h2v2h-2zM527 468h2v2h-2zM518 477h2v2h-2zM527 477h2v2h-2z" fill="#F8F8B0" stroke="none"/>
<rect x="532" y="454" width="1.5" height="9" fill="#F8F8B0" stroke="none"/>
<rect x="535" y="454" width="1.5" height="9" fill="#F8F8B0" stroke="none"/>
<rect x="538" y="454" width="1.5" height="9" fill="#F8F8B0" stroke="none"/>
<rect x="541" y="454" width="1.5" height="9" fill="#F8F8B0" stroke="none"/>
<rect x="544" y="454" width="1.5" height="9" fill="#F8F8B0" stroke="none"/>
<rect x="546" y="454" width="1.5" height="9" fill="#F8F8B0" stroke="none"/>
<rect x="549" y="454" width="1.5" height="9" fill="#F8F8B0" stroke="none"/>
<rect x="552" y="454" width="1.5" height="9" fill="#F8F8B0" stroke="none"/>
<rect x="555" y="454" width="1.5" height="9" fill="#F8F8B0" stroke="none"/>
<rect x="558" y="454" width="1.5" height="9" fill="#F8F8B0" stroke="none"/>
<rect x="561" y="454" width="1.5" height="9" fill="#F8F8B0" stroke="none"/>
<path d="M543.6 454.5H562M543.6 462.5H562"/>
<rect x="532" y="482" width="1.5" height="9" fill="#F8F8B0" stroke="none"/>
<rect x="535" y="482" width="1.5" height="9" fill="#F8F8B0" stroke="none"/>
<rect x="538" y="482" width="1.5" height="9" fill="#F8F8B0" stroke="none"/>
<rect x="541" y="482" width="1.5" height="9" fill="#F8F8B0" stroke="none"/>
<rect x="544" y="482" width="1.5" height="9" fill="#F8F8B0" stroke="none"/>
<rect x="546" y="482" width="1.5" height="9" fill="#F8F8B0" stroke="none"/>
<rect x="549" y="482" width="1.5" height="9" fill="#F8F8B0" stroke="none"/>
<rect x="552" y="482" width="1.5" height="9" fill="#F8F8B0" stroke="none"/>
<rect x="555" y="482" width="1.5" height="9" fill="#F8F8B0" stroke="none"/>
<rect x="558" y="482" width="1.5" height="9" fill="#F8F8B0" stroke="none"/>
<rect x="561" y="482" width="1.5" height="9" fill="#F8F8B0" stroke="none"/>
<path d="M543.6 482.5H562M543.6 490.5H562"/>
<path d="M518 483.5H514.5V491.5H518M524 483.5H527.5V491.5H524M518 487.5H524"/>
<path d="M513.5 482.5h2v2h-2zM526.5 482.5h2v2h-2zM513.5 490.5h2v2h-2zM526.5 490.5h2v2h-2z" fill="#F8F8B0" stroke="none"/>
<path d="M518 496.5H514.5V504.5H518M524 496.5H527.5V504.5H524M518 500.5H524"/>
<path d="M513.5 495.5h2v2h-2zM526.5 495.5h2v2h-2zM513.5 503.5h2v2h-2zM526.5 503.5h2v2h-2z" fill="#F8F8B0" stroke="none"/>
<rect x="544.5" y="498.5" width="8" height="8"/>
<path d="M548 502h1.2v1.2h-1.2z" fill="#F8F8B0" stroke="none"/>
<path d="M543 497h2v2h-2zM552 497h2v2h-2zM543 506h2v2h-2zM552 506h2v2h-2z" fill="#F8F8B0" stroke="none"/>
<rect x="514.5" y="510.5" width="8" height="8"/>
<path d="M518 514h1.2v1.2h-1.2z" fill="#F8F8B0" stroke="none"/>
<path d="M513 509h2v2h-2zM522 509h2v2h-2zM513 518h2v2h-2zM522 518h2v2h-2z" fill="#F8F8B0" stroke="none"/>
<rect x="529.5" y="510.5" width="8" height="8"/>
<path d="M533 514h1.2v1.2h-1.2z" fill="#F8F8B0" stroke="none"/>
<path d="M528 509h2v2h-2zM537 509h2v2h-2zM528 518h2v2h-2zM537 518h2v2h-2z" fill="#F8F8B0" stroke="none"/>
<rect x="544.5" y="514.5" width="8" height="8"/>
<path d="M548 518h1.2v1.2h-1.2z" fill="#F8F8B0" stroke="none"/>
<path d="M543 513h2v2h-2zM552 513h2v2h-2zM543 522h2v2h-2zM552 522h2v2h-2z" fill="#F8F8B0" stroke="none"/>
<rect x="559.5" y="514.5" width="8" height="8"/>
<path d="M563 518h1.2v1.2h-1.2z" fill="#F8F8B0" stroke="none"/>
<path d="M558 513h2v2h-2zM567 513h2v2h-2zM558 522h2v2h-2zM567 522h2v2h-2z" fill="#F8F8B0" stroke="none"/>
<rect x="574.5" y="514.5" width="8" height="8"/>
<path d="M578 518h1.2v1.2h-1.2z" fill="#F8F8B0" stroke="none"/>
<path d="M573 513h2v2h-2zM582 513h2v2h-2zM573 522h2v2h-2zM582 522h2v2h-2z" fill="#F8F8B0" stroke="none"/>
<path d="M565.5 444V439.5H573.5V444M565.5 449V453.5H573.5V449M569.5 443V450"/>
<path d="M564.5 438.5h2v2h-2zM572.5 438.5h2v2h-2zM564.5 452.5h2v2h-2zM572.5 452.5h2v2h-2z" fill="#F8F8B0" stroke="none"/>
<path d="M578.5 444V439.5H586.5V444M578.5 449V453.5H586.5V449M582.5 443V450"/>
<path d="M577.5 438.5h2v2h-2zM585.5 438.5h2v2h-2zM577.5 452.5h2v2h-2zM585.5 452.5h2v2h-2z" fill="#F8F8B0" stroke="none"/>
<path d="M565.5 462V457.5H573.5V462M565.5 467V471.5H573.5V467M569.5 461V468"/>
<path d="M564.5 456.5h2v2h-2zM572.5 456.5h2v2h-2zM564.5 470.5h2v2h-2zM572.5 470.5h2v2h-2z" fill="#F8F8B0" stroke="none"/>
<path d="M578.5 462V457.5H586.5V462M578.5 467V471.5H586.5V467M582.5 461V468"/>
<path d="M577.5 456.5h2v2h-2zM585.5 456.5h2v2h-2zM577.5 470.5h2v2h-2zM585.5 470.5h2v2h-2z" fill="#F8F8B0" stroke="none"/>
<path d="M591.5 462V457.5H599.5V462M591.5 467V471.5H599.5V467M595.5 461V468"/>
<path d="M590.5 456.5h2v2h-2zM598.5 456.5h2v2h-2zM590.5 470.5h2v2h-2zM598.5 470.5h2v2h-2z" fill="#F8F8B0" stroke="none"/>
<path d="M604.5 462V457.5H612.5V462M604.5 467V471.5H612.5V467M608.5 461V468"/>
<path d="M603.5 456.5h2v2h-2zM611.5 456.5h2v2h-2zM603.5 470.5h2v2h-2zM611.5 470.5h2v2h-2z" fill="#F8F8B0" stroke="none"/>
<rect x="577.5" y="477.5" width="8" height="8"/>
<path d="M581 481h1.2v1.2h-1.2z" fill="#F8F8B0" stroke="none"/>
<path d="M576 476h2v2h-2zM585 476h2v2h-2zM576 485h2v2h-2zM585 485h2v2h-2z" fill="#F8F8B0" stroke="none"/>
<rect x="577.5" y="492.5" width="8" height="8"/>
<path d="M581 496h1.2v1.2h-1.2z" fill="#F8F8B0" stroke="none"/>
<path d="M576 491h2v2h-2zM585 491h2v2h-2zM576 500h2v2h-2zM585 500h2v2h-2z" fill="#F8F8B0" stroke="none"/>
<rect x="591" y="480" width="1.5" height="9" fill="#F8F8B0" stroke="none"/>
<rect x="594" y="480" width="1.5" height="9" fill="#F8F8B0" stroke="none"/>
<rect x="597" y="480" width="1.5" height="9" fill="#F8F8B0" stroke="none"/>
<rect x="600" y="480" width="1.5" height="9" fill="#F8F8B0" stroke="none"/>
<rect x="603" y="480" width="1.5" height="9" fill="#F8F8B0" stroke="none"/>
<rect x="606" y="480" width="1.5" height="9" fill="#F8F8B0" stroke="none"/>
<rect x="609" y="480" width="1.5" height="9" fill="#F8F8B0" stroke="none"/>
<rect x="612" y="480" width="1.5" height="9" fill="#F8F8B0" stroke="none"/>
<rect x="615" y="480" width="1.5" height="9" fill="#F8F8B0" stroke="none"/>
<rect x="618" y="480" width="1.5" height="9" fill="#F8F8B0" stroke="none"/>
<rect x="621" y="480" width="1.5" height="9" fill="#F8F8B0" stroke="none"/>
<path d="M603.0 480.5H622M603.0 488.5H622"/>
<rect x="591" y="509" width="1.5" height="9" fill="#F8F8B0" stroke="none"/>
<rect x="594" y="509" width="1.5" height="9" fill="#F8F8B0" stroke="none"/>
<rect x="597" y="509" width="1.5" height="9" fill="#F8F8B0" stroke="none"/>
<rect x="600" y="509" width="1.5" height="9" fill="#F8F8B0" stroke="none"/>
<rect x="603" y="509" width="1.5" height="9" fill="#F8F8B0" stroke="none"/>
<rect x="606" y="509" width="1.5" height="9" fill="#F8F8B0" stroke="none"/>
<rect x="609" y="509" width="1.5" height="9" fill="#F8F8B0" stroke="none"/>
<rect x="612" y="509" width="1.5" height="9" fill="#F8F8B0" stroke="none"/>
<rect x="615" y="509" width="1.5" height="9" fill="#F8F8B0" stroke="none"/>
<rect x="618" y="509" width="1.5" height="9" fill="#F8F8B0" stroke="none"/>
<rect x="621" y="509" width="1.5" height="9" fill="#F8F8B0" stroke="none"/>
<path d="M603.0 509.5H622M603.0 517.5H622"/>
<rect x="594.5" y="520.5" width="8" height="8"/>
<path d="M598 524h1.2v1.2h-1.2z" fill="#F8F8B0" stroke="none"/>
<path d="M593 519h2v2h-2zM602 519h2v2h-2zM593 528h2v2h-2zM602 528h2v2h-2z" fill="#F8F8B0" stroke="none"/>
<rect x="610.5" y="520.5" width="8" height="8"/>
<path d="M614 524h1.2v1.2h-1.2z" fill="#F8F8B0" stroke="none"/>
<path d="M609 519h2v2h-2zM618 519h2v2h-2zM609 528h2v2h-2zM618 528h2v2h-2z" fill="#F8F8B0" stroke="none"/>
<rect x="629.5" y="473.5" width="8" height="8"/>
<path d="M633 477h1.2v1.2h-1.2z" fill="#F8F8B0" stroke="none"/>
<path d="M628 472h2v2h-2zM637 472h2v2h-2zM628 481h2v2h-2zM637 481h2v2h-2z" fill="#F8F8B0" stroke="none"/>
<rect x="644.5" y="473.5" width="8" height="8"/>
<path d="M648 477h1.2v1.2h-1.2z" fill="#F8F8B0" stroke="none"/>
<path d="M643 472h2v2h-2zM652 472h2v2h-2zM643 481h2v2h-2zM652 481h2v2h-2z" fill="#F8F8B0" stroke="none"/>
<path d="M635.6 493.5H629.5V498.5M629.5 500.5V506.5H635.6M641.4 493.5H649.5V498.5M649.5 500.5V506.5H641.4"/>
<rect x="634.5" y="498.5" width="9" height="2"/>
<path d="M629 493h1.5M649 493h1.5M629 507h1.5M649 507h1.5" stroke-width="1.6"/>
<path d="M635.6 517.5H629.5V522.5M629.5 524.5V530.5H635.6M641.4 517.5H649.5V522.5M649.5 524.5V530.5H641.4"/>
<rect x="634.5" y="522.5" width="9" height="2"/>
<path d="M629 517h1.5M649 517h1.5M629 531h1.5M649 531h1.5" stroke-width="1.6"/>
<path d="M601 550.5H597.5V558.5H601M607 550.5H610.5V558.5H607M601 554.5H607"/>
<path d="M596.5 549.5h2v2h-2zM609.5 549.5h2v2h-2zM596.5 557.5h2v2h-2zM609.5 557.5h2v2h-2z" fill="#F8F8B0" stroke="none"/>
<path d="M601 563.5H597.5V571.5H601M607 563.5H610.5V571.5H607M601 567.5H607"/>
<path d="M596.5 562.5h2v2h-2zM609.5 562.5h2v2h-2zM596.5 570.5h2v2h-2zM609.5 570.5h2v2h-2z" fill="#F8F8B0" stroke="none"/>
<rect x="534.5" y="572.5" width="8" height="8"/>
<path d="M538 576h1.2v1.2h-1.2z" fill="#F8F8B0" stroke="none"/>
<path d="M533 571h2v2h-2zM542 571h2v2h-2zM533 580h2v2h-2zM542 580h2v2h-2z" fill="#F8F8B0" stroke="none"/>
<rect x="549.5" y="572.5" width="8" height="8"/>
<path d="M553 576h1.2v1.2h-1.2z" fill="#F8F8B0" stroke="none"/>
<path d="M548 571h2v2h-2zM557 571h2v2h-2zM548 580h2v2h-2zM557 580h2v2h-2z" fill="#F8F8B0" stroke="none"/>
<rect x="563.5" y="572.5" width="8" height="8"/>
<path d="M567 576h1.2v1.2h-1.2z" fill="#F8F8B0" stroke="none"/>
<path d="M562 571h2v2h-2zM571 571h2v2h-2zM562 580h2v2h-2zM571 580h2v2h-2z" fill="#F8F8B0" stroke="none"/>
<rect x="534.5" y="586.5" width="8" height="8"/>
<path d="M538 590h1.2v1.2h-1.2z" fill="#F8F8B0" stroke="none"/>
<path d="M533 585h2v2h-2zM542 585h2v2h-2zM533 594h2v2h-2zM542 594h2v2h-2z" fill="#F8F8B0" stroke="none"/>
<rect x="549.5" y="586.5" width="8" height="8"/>
<path d="M553 590h1.2v1.2h-1.2z" fill="#F8F8B0" stroke="none"/>
<path d="M548 585h2v2h-2zM557 585h2v2h-2zM548 594h2v2h-2zM557 594h2v2h-2z" fill="#F8F8B0" stroke="none"/>
<rect x="563.5" y="586.5" width="8" height="8"/>
<path d="M567 590h1.2v1.2h-1.2z" fill="#F8F8B0" stroke="none"/>
<path d="M562 585h2v2h-2zM571 585h2v2h-2zM562 594h2v2h-2zM571 594h2v2h-2z" fill="#F8F8B0" stroke="none"/>
<rect x="600.5" y="610.5" width="8" height="8"/>
<path d="M604 614h1.2v1.2h-1.2z" fill="#F8F8B0" stroke="none"/>
<path d="M599 609h2v2h-2zM608 609h2v2h-2zM599 618h2v2h-2zM608 618h2v2h-2z" fill="#F8F8B0" stroke="none"/>
<rect x="615.5" y="610.5" width="8" height="8"/>
<path d="M619 614h1.2v1.2h-1.2z" fill="#F8F8B0" stroke="none"/>
<path d="M614 609h2v2h-2zM623 609h2v2h-2zM614 618h2v2h-2zM623 618h2v2h-2z" fill="#F8F8B0" stroke="none"/>
<rect x="574.5" y="628.5" width="8" height="8"/>
<path d="M578 632h1.2v1.2h-1.2z" fill="#F8F8B0" stroke="none"/>
<path d="M573 627h2v2h-2zM582 627h2v2h-2zM573 636h2v2h-2zM582 636h2v2h-2z" fill="#F8F8B0" stroke="none"/>
<rect x="589.5" y="628.5" width="8" height="8"/>
<path d="M593 632h1.2v1.2h-1.2z" fill="#F8F8B0" stroke="none"/>
<path d="M588 627h2v2h-2zM597 627h2v2h-2zM588 636h2v2h-2zM597 636h2v2h-2z" fill="#F8F8B0" stroke="none"/></g><g fill="none" stroke="#F8F8B0" stroke-width="1"><circle cx="274.5" cy="125.5" r="12"/><circle cx="274.5" cy="125.5" r="8"/><circle cx="274.5" cy="125.5" r="4.5"/><path d="M262.5 125.5H286.5M274.5 113.5V137.5"/><circle cx="274.5" cy="715.5" r="12"/><circle cx="274.5" cy="715.5" r="8"/><circle cx="274.5" cy="715.5" r="4.5"/><path d="M262.5 715.5H286.5M274.5 703.5V727.5"/><path d="M274.5 140V303M274.5 540V702"/><path d="M319 122.5H299.5L291.5 130.5V149.5"/><path d="M903 122.5H922L930.5 131V149.5"/><path d="M291.5 692V711.5L299.5 719.5H319"/><path d="M930.5 691.5V710.5L922.5 719H903"/></g><path d="M280.5 518.5L267.5 518.5L276.5 524.5L276.5 524.5L276.5 517.5M280.5 511.5L279.5 511.5L279.5 510.5L280.5 510.5L280.5 511.5M273.5 497.5L274.5 498.5L274.5 503.5L273.5 504.5L268.5 504.5L267.5 503.5L267.5 498.5L268.5 497.5L279.5 497.5L280.5 498.5L280.5 503.5L279.5 504.5M267.5 487.5L267.5 494.5L273.5 494.5L273.5 488.5L274.5 487.5L279.5 487.5L280.5 488.5L280.5 493.5L279.5 494.5M280.5 483.5L280.5 478.5L279.5 477.5L268.5 477.5L267.5 478.5L267.5 483.5L268.5 484.5L279.5 484.5L280.5 483.5M279.5 484.5L268.5 477.5M280.5 464.5L267.5 464.5L267.5 458.5L268.5 457.5L271.5 457.5L273.5 458.5L273.5 464.5M273.5 458.5L274.5 457.5L279.5 457.5L280.5 458.5L280.5 464.5M276.5 454.5L276.5 447.5L273.5 447.5L271.5 448.5L271.5 453.5L273.5 454.5L279.5 454.5L280.5 453.5L280.5 448.5L279.5 447.5M267.5 442.5L279.5 442.5L280.5 441.5L280.5 438.5L279.5 437.5M271.5 444.5L271.5 438.5M271.5 434.5L280.5 432.5L274.5 431.5L280.5 429.5L271.5 427.5M276.5 424.5L276.5 417.5L273.5 417.5L271.5 418.5L271.5 423.5L273.5 424.5L279.5 424.5L280.5 423.5L280.5 418.5L279.5 417.5M276.5 414.5L276.5 407.5L273.5 407.5L271.5 408.5L271.5 413.5L273.5 414.5L279.5 414.5L280.5 413.5L280.5 408.5L279.5 407.5M280.5 404.5L271.5 404.5M273.5 404.5L271.5 403.5L271.5 398.5L273.5 397.5L280.5 397.5M267.5 384.5L267.5 377.5M267.5 381.5L280.5 381.5M271.5 373.5L271.5 368.5L273.5 367.5L280.5 367.5M276.5 367.5L276.5 373.5L277.5 374.5L279.5 374.5L280.5 373.5L280.5 368.5L279.5 367.5M280.5 363.5L271.5 363.5M274.5 363.5L271.5 361.5L271.5 357.5M271.5 347.5L283.5 347.5L284.5 348.5L284.5 353.5M273.5 347.5L271.5 348.5L271.5 353.5L273.5 354.5L277.5 354.5L279.5 353.5L279.5 348.5L277.5 347.5M276.5 344.5L276.5 337.5L273.5 337.5L271.5 338.5L271.5 343.5L273.5 344.5L279.5 344.5L280.5 343.5L280.5 338.5L279.5 337.5M267.5 332.5L279.5 332.5L280.5 331.5L280.5 328.5L279.5 327.5M271.5 334.5L271.5 328.5M273.5 317.5L271.5 318.5L271.5 323.5L273.5 324.5L274.5 324.5L276.5 323.5L276.5 318.5L277.5 317.5L279.5 317.5L280.5 318.5L280.5 323.5L279.5 324.5" fill="none" stroke="#F8F8B0" stroke-width="1" stroke-linejoin="miter"/><path d="M956.5 471.5L946.5 471.5L946.5 466.5L947.5 465.5L950.5 465.5L951.5 466.5L951.5 471.5M949.5 461.5L949.5 459.5L956.5 459.5M947.5 459.5L946.5 459.5M956.5 461.5L956.5 457.5M956.5 454.5L949.5 454.5M950.5 454.5L949.5 453.5L949.5 449.5L950.5 448.5L956.5 448.5M947.5 431.5L946.5 432.5L946.5 436.5L947.5 437.5L950.5 437.5L951.5 436.5L951.5 432.5L952.5 431.5L955.5 431.5L956.5 432.5L956.5 436.5L955.5 437.5M956.5 428.5L956.5 423.5L955.5 422.5L950.5 422.5L949.5 423.5L949.5 428.5L950.5 429.5L955.5 429.5L956.5 428.5M946.5 419.5L946.5 417.5L956.5 417.5M956.5 419.5L956.5 415.5M946.5 405.5L956.5 405.5M955.5 405.5L956.5 407.5L956.5 411.5L955.5 412.5L950.5 412.5L949.5 411.5L949.5 407.5L950.5 405.5M953.5 403.5L953.5 397.5L950.5 397.5L949.5 398.5L949.5 402.5L950.5 403.5L955.5 403.5L956.5 402.5L956.5 398.5L955.5 397.5M956.5 394.5L949.5 394.5M951.5 394.5L949.5 392.5L949.5 389.5M947.5 372.5L946.5 373.5L946.5 377.5L947.5 378.5L950.5 378.5L951.5 377.5L951.5 373.5L952.5 372.5L955.5 372.5L956.5 373.5L956.5 377.5L955.5 378.5M949.5 368.5L949.5 366.5L956.5 366.5M947.5 366.5L946.5 366.5M956.5 368.5L956.5 364.5M946.5 355.5L956.5 355.5M955.5 355.5L956.5 356.5L956.5 360.5L955.5 361.5L950.5 361.5L949.5 360.5L949.5 356.5L950.5 355.5M953.5 353.5L953.5 346.5L950.5 346.5L949.5 347.5L949.5 352.5L950.5 353.5L955.5 353.5L956.5 352.5L956.5 347.5L955.5 346.5" fill="none" stroke="#F8F8B0" stroke-width="1" stroke-linejoin="miter"/><path d="M973.5 494.5L962.5 494.5L962.5 489.5L963.5 488.5L967.5 488.5L968.5 489.5L968.5 494.5M966.5 484.5L966.5 480.5L967.5 479.5L973.5 479.5M969.5 479.5L969.5 484.5L970.5 485.5L971.5 485.5L973.5 484.5L973.5 480.5L971.5 479.5M967.5 471.5L966.5 472.5L966.5 476.5L967.5 477.5L968.5 477.5L969.5 476.5L969.5 472.5L970.5 471.5L971.5 471.5L973.5 472.5L973.5 476.5L971.5 477.5M962.5 466.5L971.5 466.5L973.5 465.5L973.5 463.5L971.5 462.5M966.5 469.5L966.5 463.5M969.5 460.5L969.5 454.5L967.5 454.5L966.5 455.5L966.5 459.5L967.5 460.5L971.5 460.5L973.5 459.5L973.5 455.5L971.5 454.5M973.5 452.5L966.5 452.5M967.5 452.5L966.5 451.5L966.5 450.5L967.5 449.5L973.5 449.5M967.5 449.5L966.5 447.5L966.5 446.5L967.5 445.5L973.5 445.5M966.5 442.5L966.5 438.5L967.5 437.5L973.5 437.5M969.5 437.5L969.5 442.5L970.5 443.5L971.5 443.5L973.5 442.5L973.5 438.5L971.5 437.5M967.5 428.5L966.5 430.5L966.5 434.5L967.5 435.5L968.5 435.5L969.5 434.5L969.5 430.5L970.5 428.5L971.5 428.5L973.5 430.5L973.5 434.5L971.5 435.5M962.5 424.5L971.5 424.5L973.5 423.5L973.5 421.5L971.5 420.5M966.5 426.5L966.5 421.5M969.5 418.5L969.5 412.5L967.5 412.5L966.5 413.5L966.5 417.5L967.5 418.5L971.5 418.5L973.5 417.5L973.5 413.5L971.5 412.5M973.5 408.5L966.5 408.5M968.5 408.5L966.5 406.5L966.5 403.5M963.5 386.5L962.5 387.5L962.5 391.5L963.5 393.5L966.5 393.5L967.5 391.5L967.5 387.5L968.5 386.5L971.5 386.5L973.5 387.5L973.5 391.5L971.5 393.5M973.5 383.5L973.5 379.5L971.5 378.5L967.5 378.5L966.5 379.5L966.5 383.5L967.5 384.5L971.5 384.5L973.5 383.5M962.5 375.5L962.5 372.5L973.5 372.5M973.5 375.5L973.5 370.5M962.5 361.5L973.5 361.5M971.5 361.5L973.5 362.5L973.5 366.5L971.5 367.5L967.5 367.5L966.5 366.5L966.5 362.5L967.5 361.5M969.5 359.5L969.5 352.5L967.5 352.5L966.5 353.5L966.5 358.5L967.5 359.5L971.5 359.5L973.5 358.5L973.5 353.5L971.5 352.5M973.5 349.5L966.5 349.5M968.5 349.5L966.5 347.5L966.5 344.5M963.5 327.5L962.5 328.5L962.5 332.5L963.5 333.5L966.5 333.5L967.5 332.5L967.5 328.5L968.5 327.5L971.5 327.5L973.5 328.5L973.5 332.5L971.5 333.5M966.5 324.5L966.5 322.5L973.5 322.5M963.5 322.5L962.5 322.5M973.5 324.5L973.5 320.5M962.5 310.5L973.5 310.5M971.5 310.5L973.5 311.5L973.5 315.5L971.5 316.5L967.5 316.5L966.5 315.5L966.5 311.5L967.5 310.5M969.5 308.5L969.5 302.5L967.5 302.5L966.5 303.5L966.5 307.5L967.5 308.5L971.5 308.5L973.5 307.5L973.5 303.5L971.5 302.5" fill="none" stroke="#F8F8B0" stroke-width="1" stroke-linejoin="miter"/><path d="M930.5 584.5L929.5 585.5L929.5 589.5L930.5 590.5L938.5 590.5L940.5 589.5L940.5 585.5L938.5 584.5M940.5 580.5L933.5 580.5M935.5 580.5L933.5 578.5L933.5 575.5M940.5 572.5L940.5 568.5L938.5 567.5L934.5 567.5L933.5 568.5L933.5 572.5L934.5 573.5L938.5 573.5L940.5 572.5M943.5 565.5L933.5 565.5M934.5 565.5L933.5 564.5L933.5 559.5L934.5 558.5L938.5 558.5L940.5 559.5L940.5 564.5L938.5 565.5M940.5 548.5L929.5 548.5L935.5 545.5L929.5 541.5L940.5 541.5M933.5 538.5L933.5 534.5L934.5 533.5L940.5 533.5M936.5 533.5L936.5 538.5L937.5 539.5L938.5 539.5L940.5 538.5L940.5 534.5L938.5 533.5M940.5 530.5L933.5 530.5M935.5 530.5L933.5 528.5L933.5 524.5M940.5 522.5L929.5 522.5M937.5 522.5L933.5 517.5M935.5 520.5L940.5 516.5M934.5 508.5L933.5 509.5L933.5 513.5L934.5 514.5L935.5 514.5L936.5 513.5L936.5 509.5L937.5 508.5L938.5 508.5L940.5 509.5L940.5 513.5L938.5 514.5" fill="none" stroke="#F8F8B0" stroke-width="1" stroke-linejoin="miter"/><path d="M929.5 685.5L929.5 679.5M929.5 682.5L940.5 682.5M933.5 676.5L933.5 671.5L934.5 670.5L940.5 670.5M936.5 670.5L936.5 676.5L937.5 677.5L938.5 677.5L940.5 676.5L940.5 671.5L938.5 670.5M940.5 667.5L933.5 667.5M935.5 667.5L933.5 665.5L933.5 662.5M933.5 653.5L942.5 653.5L943.5 655.5L943.5 659.5M934.5 653.5L933.5 655.5L933.5 659.5L934.5 660.5L937.5 660.5L938.5 659.5L938.5 655.5L937.5 653.5M936.5 651.5L936.5 645.5L934.5 645.5L933.5 646.5L933.5 650.5L934.5 651.5L938.5 651.5L940.5 650.5L940.5 646.5L938.5 645.5M929.5 641.5L938.5 641.5L940.5 640.5L940.5 638.5L938.5 637.5M933.5 643.5L933.5 638.5M934.5 628.5L933.5 629.5L933.5 633.5L934.5 634.5L935.5 634.5L936.5 633.5L936.5 629.5L937.5 628.5L938.5 628.5L940.5 629.5L940.5 633.5L938.5 634.5" fill="none" stroke="#F8F8B0" stroke-width="1" stroke-linejoin="miter"/><path d="M171.5 716V760M162 746.5H201" stroke="#E8E8E0" stroke-width="1.2" fill="none" shape-rendering="crispEdges"/></svg></div></div>
<!-- /canvas -->

<div class="a" id="status"></div>

<!-- title content -->
<div class="a" style="left:0;top:0;width:8px;height:8px;background:#fff"></div>
<div class="a" style="left:0;top:0;width:10px;height:10px;border-top-left-radius:9px;border-top:2px solid #5F5E70;border-left:2px solid #5F5E70;background:linear-gradient(#F8F8FC,#D8D8E6)"></div>
<div class="a" style="left:1092px;top:0;width:8px;height:8px;background:#fff"></div>
<div class="a" style="left:1090px;top:0;width:10px;height:10px;border-top-right-radius:9px;border-top:2px solid #5F5E70;border-right:2px solid #5F5E70;background:linear-gradient(#F8F8FC,#D8D8E6)"></div>
<div class="a gc" style="left:6px;top:8px;width:16px;height:15px"><span>GC</span></div>
<div class="a" style="left:26px;top:9.5px;font-size:13.4px;color:#101018;white-space:nowrap;letter-spacing:0;-webkit-text-stroke:0.35px #101018">GC-Prevue - [GWK1.gwk]</div>
<div class="a tbtn" style="left:1027px;top:6px"><div class="a" style="left:3px;top:12px;width:8px;height:3px;background:#3C3C50;box-shadow:0 1px 0 #fff"></div></div>
<div class="a tbtn" style="left:1050px;top:6px"><div class="a" style="left:4px;top:4px;width:11px;height:11px;border:1px solid #202030;border-top:3px solid #202030;box-shadow:1px 1px 0 #fff"></div></div>
<div class="a tbtn close" style="left:1073px;top:6px"><svg class="a" style="left:0;top:0" width="21" height="21"><path d="M4.5 3.5L15.5 15M15.5 3.5L4.5 15" stroke="#fff" stroke-width="2.6"/></svg></div>
<!-- menu -->
<div class="a gc" style="left:8px;top:31px;width:17px;height:16px"><span>GC</span></div>
<div class="a menu" style="left:31px"><u>F</u>ile</div>
<div class="a menu" style="left:59px"><u>E</u>dit</div>
<div class="a menu" style="left:89px"><u>V</u>iew</div>
<div class="a menu" style="left:123px">T<u>o</u>ols</div>
<div class="a menu" style="left:160px"><u>W</u>indow</div>
<div class="a menu" style="left:210px"><u>H</u>elp</div>
<div class="a mdib" style="left:1040px"><div class="a" style="left:3px;top:9px;width:7px;height:2px;background:#606068"></div></div>
<div class="a mdib" style="left:1059px"><div class="a" style="left:2px;top:5px;width:8px;height:6px;border:1px solid #505058;border-top-width:2px"></div><div class="a" style="left:5px;top:2px;width:7px;height:5px;border-top:2px solid #505058;border-right:1px solid #505058"></div></div>
<div class="a mdib" style="left:1078px"><svg class="a" style="left:0;top:0" width="17" height="17"><path d="M4 3.5L11 10.5M11 3.5L4 10.5" stroke="#505058" stroke-width="2"/></svg></div>
<svg class="a" style="left:0;top:0" width="1100" height="84" shape-rendering="crispEdges">
<g id="grips"><rect x="7" y="53" width="2" height="27" fill="#fff"/><rect x="9" y="53" width="1" height="28" fill="#A0A0A8"/><rect x="11" y="53" width="2" height="27" fill="#fff"/><rect x="13" y="53" width="1" height="28" fill="#A0A0A8"/><rect x="7" y="80" width="7" height="1" fill="#A0A0A8"/><rect x="203" y="53" width="2" height="27" fill="#fff"/><rect x="205" y="53" width="1" height="28" fill="#A0A0A8"/><rect x="207" y="53" width="2" height="27" fill="#fff"/><rect x="209" y="53" width="1" height="28" fill="#A0A0A8"/><rect x="203" y="80" width="7" height="1" fill="#A0A0A8"/><rect x="291" y="53" width="2" height="27" fill="#fff"/><rect x="293" y="53" width="1" height="28" fill="#A0A0A8"/><rect x="295" y="53" width="2" height="27" fill="#fff"/><rect x="297" y="53" width="1" height="28" fill="#A0A0A8"/><rect x="291" y="80" width="7" height="1" fill="#A0A0A8"/><rect x="356" y="53" width="2" height="27" fill="#fff"/><rect x="358" y="53" width="1" height="28" fill="#A0A0A8"/><rect x="360" y="53" width="2" height="27" fill="#fff"/><rect x="362" y="53" width="1" height="28" fill="#A0A0A8"/><rect x="356" y="80" width="7" height="1" fill="#A0A0A8"/><rect x="435" y="53" width="2" height="27" fill="#fff"/><rect x="437" y="53" width="1" height="28" fill="#A0A0A8"/><rect x="439" y="53" width="2" height="27" fill="#fff"/><rect x="441" y="53" width="1" height="28" fill="#A0A0A8"/><rect x="435" y="80" width="7" height="1" fill="#A0A0A8"/><rect x="477" y="53" width="2" height="27" fill="#fff"/><rect x="479" y="53" width="1" height="28" fill="#A0A0A8"/><rect x="481" y="53" width="2" height="27" fill="#fff"/><rect x="483" y="53" width="1" height="28" fill="#A0A0A8"/><rect x="477" y="80" width="7" height="1" fill="#A0A0A8"/><rect x="634" y="53" width="2" height="27" fill="#fff"/><rect x="636" y="53" width="1" height="28" fill="#A0A0A8"/><rect x="638" y="53" width="2" height="27" fill="#fff"/><rect x="640" y="53" width="1" height="28" fill="#A0A0A8"/><rect x="634" y="80" width="7" height="1" fill="#A0A0A8"/><rect x="198" y="52" width="1" height="30" fill="#A8A8B0"/><rect x="199" y="52" width="1" height="30" fill="#fff"/><rect x="286" y="52" width="1" height="30" fill="#A8A8B0"/><rect x="287" y="52" width="1" height="30" fill="#fff"/><rect x="351" y="52" width="1" height="30" fill="#A8A8B0"/><rect x="352" y="52" width="1" height="30" fill="#fff"/><rect x="430" y="52" width="1" height="30" fill="#A8A8B0"/><rect x="431" y="52" width="1" height="30" fill="#fff"/><rect x="472" y="52" width="1" height="30" fill="#A8A8B0"/><rect x="473" y="52" width="1" height="30" fill="#fff"/><rect x="629" y="52" width="1" height="30" fill="#A8A8B0"/><rect x="630" y="52" width="1" height="30" fill="#fff"/><rect x="901" y="52" width="1" height="30" fill="#A8A8B0"/><rect x="902" y="52" width="1" height="30" fill="#fff"/><rect x="88" y="54" width="1" height="26" fill="#A0A0A8"/><rect x="89" y="54" width="1" height="26" fill="#fff"/><rect x="96" y="54" width="1" height="26" fill="#A0A0A8"/><rect x="97" y="54" width="1" height="26" fill="#fff"/></g>
<!-- New -->
<path d="M21.5 59.5H29.5L32.5 62.5V72.5H21.5Z" fill="#fff" stroke="#000"/>
<path d="M29 60L32 63" stroke="#000" fill="none"/>
<!-- Open -->
<path d="M42.5 61.5H47.5L48.5 62.5H52.5V65.5H42.5Z" fill="#F8F890" stroke="#000"/>
<path d="M42.5 72.5L46.5 65.5H57.5L53.5 72.5Z" fill="#808030" stroke="#000" stroke-linejoin="round"/>
<path d="M42.5 61.5V72.5" stroke="#000"/>
<path d="M50.5 58.5C51.5 57 54 57 55.5 59" stroke="#000" fill="none" shape-rendering="auto"/>
<path d="M54 60H57V57" stroke="#000" fill="none"/>
<!-- Save -->
<rect x="65.5" y="59.5" width="13" height="13" fill="#808030" stroke="#000"/>
<rect x="68" y="60" width="8" height="6" fill="#E8E8E8"/>
<rect x="68" y="68" width="9" height="5" fill="#000"/>
<rect x="74" y="69" width="2" height="3" fill="#fff"/>
<rect x="66" y="60" width="1" height="1" fill="#fff"/>
<rect x="77" y="60" width="1" height="1" fill="#fff"/>
<!-- Print preview -->
<path d="M103.5 59.5H110.5L113.5 62.5V73.5H103.5Z" fill="#fff" stroke="#000"/>
<circle cx="112.5" cy="67.5" r="4" fill="#A8D0D0" stroke="#000" shape-rendering="auto"/>
<path d="M115 70L119 74" stroke="#000" stroke-width="2" shape-rendering="auto"/>
<!-- Printer -->
<path d="M129.5 60.5H138.5L140.5 64.5H129.5Z" fill="#fff" stroke="#000"/>
<rect x="126.5" y="64.5" width="15" height="6" fill="#E0E0E0" stroke="#000"/>
<rect x="127.5" y="70.5" width="13" height="2" fill="#fff" stroke="#000"/>
<path d="M129 67H136" stroke="#808080"/>
<rect x="138" y="65" width="3" height="5" fill="#808080"/>
<!-- Help -->
<path d="M153.5 63.5C153.5 58.5 161.5 58.5 161.5 63C161.5 66 158 66 158 68.5" stroke="#000" stroke-width="4" fill="none" shape-rendering="auto"/>
<path d="M153.5 63.5C153.5 58.5 161.5 58.5 161.5 63C161.5 66 158 66 158 68.5" stroke="#FFFF00" stroke-width="2" fill="none" shape-rendering="auto"/>
<rect x="156" y="69.5" width="4" height="4" fill="#000"/>
<rect x="157" y="70.5" width="2" height="2" fill="#FFFF00"/>
<!-- Context help -->
<path d="M173 59V72L176 69L178.5 74L180 73.5L178 68.5H182Z" fill="#000"/>
<path d="M181 62C181 58.5 187 58.5 187 62C187 64.5 184 64.5 184 67" stroke="#000080" stroke-width="2" fill="none" shape-rendering="auto"/>
<rect x="183" y="69" width="2" height="2" fill="#000080"/>
<!-- Zoom 1,2,3 -->
<g id="z1" transform="translate(214,0)">
<rect x="0" y="59" width="16" height="2" fill="#C00000"/>
<rect x="0" y="63" width="16" height="2" fill="#20B020"/>
<rect x="0" y="66" width="16" height="3" fill="#F0F070"/>
<rect x="0" y="71" width="16" height="2" fill="#0000B0"/>
<circle cx="6" cy="63.5" r="4.5" fill="#F0F0F0" stroke="#000" stroke-width="1.2" shape-rendering="auto"/>
<path d="M9 67L15 73" stroke="#000" stroke-width="2" shape-rendering="auto"/>
</g>
<g transform="translate(237,0)">
<rect x="0" y="59" width="16" height="2" fill="#C00000"/>
<rect x="0" y="63" width="16" height="2" fill="#20B020"/>
<rect x="0" y="66" width="16" height="3" fill="#F0F070"/>
<rect x="0" y="71" width="16" height="2" fill="#0000B0"/>
<circle cx="6" cy="63.5" r="4.5" fill="#F0F0F0" stroke="#000" stroke-width="1.2" shape-rendering="auto"/>
<path d="M3.5 61L8.5 66M8.5 61L3.5 66" stroke="#000" stroke-width="1.2" shape-rendering="auto"/>
<path d="M9 67L15 73" stroke="#000" stroke-width="2" shape-rendering="auto"/>
</g>
<g transform="translate(260,0)">
<rect x="0" y="59" width="16" height="2" fill="#C00000"/>
<rect x="0" y="63" width="16" height="2" fill="#20B020"/>
<rect x="0" y="66" width="16" height="3" fill="#F0F070"/>
<rect x="0" y="71" width="16" height="2" fill="#0000B0"/>
<circle cx="6" cy="63.5" r="4.5" fill="#F0F0F0" stroke="#000" stroke-width="1.2" shape-rendering="auto"/>
<path d="M7.5 61H4.5V66H7.5M4.5 63.5H7" stroke="#000" fill="none"/>
<path d="M9 67L15 73" stroke="#000" stroke-width="2" shape-rendering="auto"/>
</g>
<!-- pressed buttons -->
<rect x="299" y="55" width="22" height="23" fill="url(#chk)"/>
<path d="M299.5 77.5V55.5H320.5" stroke="#A0A0A8" fill="none"/>
<path d="M299.5 77.5H320.5V55.5" stroke="#fff" fill="none"/>
<rect x="307" y="62" width="6" height="6" fill="#000"/>
<rect x="311" y="70" width="3" height="3" fill="#000"/>
<rect x="322" y="55" width="23" height="23" fill="url(#chk)"/>
<path d="M322.5 77.5V55.5H344.5" stroke="#A0A0A8" fill="none"/>
<path d="M322.5 77.5H344.5V55.5" stroke="#fff" fill="none"/>
<path d="M329.5 60.5L340.5 71.5" stroke="#000" stroke-width="2" shape-rendering="auto"/>
<path d="M329.5 67.5L335 73" stroke="#000" stroke-width="1.5" shape-rendering="auto"/>
<defs><pattern id="chk" width="2" height="2" patternUnits="userSpaceOnUse"><rect width="2" height="2" fill="#F4F4F6"/><rect width="1" height="1" fill="#D8D8DC"/><rect x="1" y="1" width="1" height="1" fill="#D8D8DC"/></pattern></defs>
<!-- combo -->
<rect x="364.5" y="56.5" width="57" height="19" fill="#fff" stroke="#808088"/>
<rect x="365.5" y="57.5" width="55" height="17" fill="none" stroke="#C0C0C8"/>
<rect x="405" y="58" width="15" height="16" fill="#D4D4DA"/>
<path d="M405.5 73.5V58.5H419.5" stroke="#fff" fill="none"/>
<path d="M405.5 73.5H419.5V58.5" stroke="#808088" fill="none"/>
<path d="M409 64H416L412.5 68Z" fill="#000" shape-rendering="auto"/>
<text x="367.5" y="71" font-family="Liberation Sans" font-size="11" fill="#101048" shape-rendering="auto">mm</text>
<!-- filter -->
<path d="M446.5 61.5H461.5L456 67V71.5H452V67Z" fill="#C8F0F0" stroke="#000" stroke-linejoin="round"/>
<path d="M456 62H461L456 67Z" fill="#208070"/>
<!-- rotate (disabled) -->
<path d="M501.5 61.5A6.3 6.3 0 1 0 501.5 70" stroke="#8C8C8C" stroke-width="1.3" fill="none" shape-rendering="auto"/>
<path d="M499.5 63.5L502 67L504.5 63.5Z" fill="#8C8C8C" shape-rendering="auto"/>
<path d="M494.5 65.5H496.5M495.5 64.5V66.5" stroke="#8C8C8C"/>
<!-- align 1 -->
<path d="M511 60H517V72H513V63H511Z" fill="#8E8E8E"/>
<path d="M520 60H526V63H524V72H520Z" fill="#8E8E8E"/>
<rect x="518" y="58" width="1" height="17" fill="#8E8E8E"/>
<!-- align 2 -->
<path d="M542 58H548V63.5H536V60.5H542Z" fill="#8E8E8E"/>
<path d="M536 67H548V73H542V70H536Z" fill="#8E8E8E"/>
<rect x="533" y="65" width="17" height="1" fill="#8E8E8E"/>
<!-- axes 1,2,3 -->
<g stroke="#000">
<path d="M559.5 58V74M557 71.5H573"/>
<path d="M582.5 58V74M580 71.5H596"/>
<path d="M605.5 58V74M603 71.5H619"/>
</g>
<g shape-rendering="auto">
<path d="M561 69.5L567 64" stroke="#000" stroke-width="1.3"/><path d="M564 63.5H568V67.5Z" fill="#000"/>
<rect x="569" y="61" width="2" height="2" fill="#000"/>
<path d="M587 66.5L592 62" stroke="#000" stroke-width="1.3"/><path d="M590 61H594V65Z" fill="#000"/>
<rect x="585" y="67.5" width="2" height="2" fill="#000"/><rect x="594.5" y="58.5" width="2" height="2" fill="#000"/>
<path d="M607 69.5L613 64" stroke="#000" stroke-width="1.3"/><path d="M609 62.5H614V67.5Z" fill="#000"/>
<path d="M612.5 62.5H619.5M616 59V66" stroke="#000"/>
</g>
<!-- REF -->
<text x="644.5" y="63.8" font-family="Liberation Sans" font-weight="bold" font-size="7.6" fill="#000" shape-rendering="auto" letter-spacing="-0.2">REF</text>
<g fill="#E00000">
<rect x="645" y="65.5" width="3" height="3"/><rect x="649" y="65.5" width="3" height="3"/><rect x="653" y="65.5" width="3" height="3"/><rect x="657.5" y="65.5" width="3" height="3"/>
<rect x="649" y="70.5" width="3" height="3"/><rect x="653" y="70.5" width="3" height="3"/><rect x="657.5" y="70.5" width="3" height="3"/>
</g>
<rect x="645.5" y="70.5" width="2" height="2.5" fill="none" stroke="#E00000"/>
<!-- net -->
<path d="M669 66L675 60H679L683 65L680 72H676L670 69Z" fill="#E8E8E8" stroke="#000" stroke-dasharray="1.5 1" shape-rendering="auto"/>
<path d="M673 63V71M676 61V72M679 61V71M670 65H682M670 68H682" stroke="#A0A0A0" shape-rendering="auto"/>
<path d="M676 69L681 66L682 70L678 72Z" fill="#505050" opacity="0.7" shape-rendering="auto"/>
<!-- pin # -->
<g fill="#D00000">
<rect x="691.5" y="58.5" width="2.5" height="2.5" fill="none" stroke="#D00000"/>
<rect x="691" y="63" width="3" height="2"/><rect x="691" y="66" width="3" height="2"/><rect x="691" y="69" width="3" height="2"/><rect x="691" y="72" width="3" height="2"/>
<rect x="704" y="60" width="3" height="2"/><rect x="704" y="63" width="3" height="2"/><rect x="704" y="66" width="3" height="2"/><rect x="704" y="69" width="3" height="2"/><rect x="704" y="72" width="3" height="2"/>
</g>
<path d="M697.5 62V70M700.5 62V70M695 64.5H703M695 67.5H703" stroke="#000"/>
<!-- 2J -->
<text x="714.5" y="67.8" font-family="Liberation Sans" font-weight="bold" font-size="13" fill="#000" shape-rendering="auto">2</text>
<circle cx="726.5" cy="60.5" r="2.5" fill="#E00000" shape-rendering="auto"/>
<path d="M726.5 62V71.5H721" stroke="#C00000" fill="none"/>
<circle cx="720.5" cy="71.5" r="2.5" fill="#E00000" shape-rendering="auto"/>
<!-- 2 + -->
<text x="736.5" y="67.8" font-family="Liberation Sans" font-weight="bold" font-size="13" fill="#000" shape-rendering="auto">2</text>
<circle cx="748.5" cy="70.5" r="3" fill="none" stroke="#D00000" shape-rendering="auto"/>
<path d="M748.5 67V74M745 70.5H752" stroke="#D00000"/>
<!-- bulb -->
<ellipse cx="765" cy="66.3" rx="4.8" ry="7.3" fill="#F00000" shape-rendering="auto"/>
<rect x="769.5" y="64" width="6.5" height="5" fill="#0000F0"/>
<!-- ring rect -->
<ellipse cx="788" cy="66.4" rx="4.6" ry="7" fill="none" stroke="#B01010" shape-rendering="auto"/>
<path d="M799 64.5H787.5V68.5H799" stroke="#0000C0" fill="none"/>
<!-- pressed 3 -->
<rect x="803" y="55" width="23" height="23" fill="url(#chk)"/>
<path d="M803.5 77.5V55.5H825.5" stroke="#A0A0A8" fill="none"/>
<path d="M803.5 77.5H825.5V55.5" stroke="#fff" fill="none"/>
<ellipse cx="812.2" cy="67.3" rx="4.6" ry="7" fill="none" stroke="#B01010" shape-rendering="auto"/>
<path d="M811 67.5H823" stroke="#0000C0"/>
<!-- donut -->
<ellipse cx="834" cy="66.3" rx="4.8" ry="7.3" fill="#F00000" shape-rendering="auto"/>
<rect x="833" y="64" width="6" height="5" fill="#40F0F0"/>
<rect x="839" y="64" width="6" height="5" fill="#0000E0"/>
<!-- ring tri -->
<ellipse cx="856.4" cy="66.3" rx="4.3" ry="7" fill="none" stroke="#B01010" shape-rendering="auto"/>
<rect x="856.5" y="62.5" width="5" height="8" fill="none" stroke="#0000C0"/>
<path d="M861.5 62.5H868M861.5 70.5H868M863 63.5L867 66.5L863 69.5" stroke="#0000C0" fill="none" shape-rendering="auto"/>
<!-- crossed boxes -->
<rect x="875.5" y="60.5" width="12" height="12" fill="none" stroke="#D00000" stroke-width="1.2"/>
<path d="M876 61L887 72M887 61L876 72" stroke="#D00000" shape-rendering="auto"/>
<rect x="880.5" y="59.5" width="9" height="10" fill="none" stroke="#0000D0" stroke-width="1.2"/>
<path d="M881 60L889 69M889 60L881 69" stroke="#0000D0" shape-rendering="auto"/>
</svg>

<!-- left panel -->
<div class="a" style="left:4px;top:83px;width:158px;height:694px;background:#E2E1E6"></div>
<div class="a" style="left:4px;top:83px;width:156px;height:1px;background:#fff"></div>
<div class="a" style="left:156px;top:83px;width:2px;height:694px;background:#F4F4F8"></div>
<div class="a" style="left:160px;top:83px;width:2px;height:694px;background:#9A9AA4"></div>
<svg class="a" style="left:0;top:0" width="162" height="800" shape-rendering="crispEdges">
<defs>
<g id="pgrip"><rect x="9" y="0" width="114" height="1" fill="#fff"/><rect x="9" y="1" width="114" height="1" fill="#A0A0A8"/><rect x="9" y="4" width="114" height="1" fill="#fff"/><rect x="9" y="5" width="114" height="1" fill="#A0A0A8"/>
<rect x="124" y="-3" width="12" height="12" fill="#E6E6EA"/><path d="M124.5 8.5V-2.5H135.5" stroke="#fff" fill="none"/><path d="M124.5 8.5H135.5V-2.5" stroke="#8A8A94" fill="none"/>
<path d="M127 4H133L130 1Z" fill="#000" shape-rendering="auto"/>
<rect x="138" y="-3" width="12" height="12" fill="#E6E6EA"/><path d="M138.5 8.5V-2.5H149.5" stroke="#fff" fill="none"/><path d="M138.5 8.5H149.5V-2.5" stroke="#8A8A94" fill="none"/>
<path d="M140.5 1.5L145.5 6.5M145.5 1.5L140.5 6.5" stroke="#000" stroke-width="1.8" shape-rendering="auto"/>
</g>
</defs>
<use href="#pgrip" x="0" y="88"/>
<use href="#pgrip" x="0" y="179"/>
<use href="#pgrip" x="0" y="349"/>
<!-- panel 1 white -->
<rect x="7" y="99" width="144" height="65" fill="#fff"/>
<rect x="57.5" y="114.5" width="50" height="35" fill="#fff" stroke="#000"/>
<rect x="63" y="116" width="39" height="32" fill="#00F000"/>
<rect x="4" y="167" width="152" height="1" fill="#fff"/>
<rect x="4" y="172" width="152" height="1" fill="#000"/>
<rect x="4" y="173" width="152" height="1" fill="#fff"/>
<rect x="4" y="337" width="152" height="1" fill="#fff"/>
<rect x="4" y="341" width="152" height="2" fill="#000"/>
<rect x="4" y="343" width="152" height="1" fill="#E8E8EC"/>
<!-- tree box -->
<rect x="8" y="361" width="142" height="415" fill="#fff"/>
<rect x="8" y="360" width="142" height="1" fill="#808088"/>
<rect x="8" y="360" width="1" height="416" fill="#808088"/>
</svg>
<div class="a" style="left:7px;top:191px;font-size:11px;line-height:13px;color:#202020;letter-spacing:-0.12px;white-space:pre">Selected Data
Pads and Drills: 0
Routs and Traces: 0
User mm
(-58.93820, -141.06870)
Absolute mm
(261.92400, 210.64560)
Relative mm
(261.92400, 210.64560)
Distance: 336.11866</div>

<!-- tree -->
<div class="a" style="left:9px;top:361px;width:140px;height:398px;overflow:hidden"><svg class="a" style="left:-9px;top:-361px" width="162" height="800" shape-rendering="crispEdges">
<defs><pattern id="dotv" width="2" height="2" patternUnits="userSpaceOnUse"><rect width="1" height="1" fill="#A0A0A0"/></pattern></defs>
<path d="M17.5 375V675" stroke="#A0A0A0" stroke-dasharray="1 1"/>
<path d="M37.5 393V611" stroke="#A0A0A0" stroke-dasharray="1 1"/>
<rect x="68" y="522" width="81" height="16" fill="#FFFF00"/>
<path d="M68 522.5H149M68 537.5H149M68.5 522V538" stroke="#404040" stroke-dasharray="1 1"/>
<path d="M22 370.5H30" stroke="#A0A0A0" stroke-dasharray="1 1"/>
<rect x="13.5" y="366.5" width="8" height="8" fill="#fff" stroke="#909098"/>
<rect x="15" y="370" width="5" height="1" fill="#000"/>
<rect x="17" y="368" width="1" height="5" fill="#000"/>
<circle cx="34.5" cy="370.5" r="4.6" fill="#F0F000" shape-rendering="auto"/>
<rect x="40" y="363" width="4" height="14" rx="2" fill="#C0C0C8" shape-rendering="auto"/>
<path d="M22 386.5H30" stroke="#A0A0A0" stroke-dasharray="1 1"/>
<rect x="13.5" y="382.5" width="8" height="8" fill="#fff" stroke="#909098"/>
<rect x="15" y="386" width="5" height="1" fill="#000"/>
<circle cx="34.5" cy="386.5" r="4.6" fill="#000000" shape-rendering="auto"/>
<rect x="40" y="379" width="4" height="14" rx="2" fill="#000000" shape-rendering="auto"/>
<path d="M42 402.5H50" stroke="#A0A0A0" stroke-dasharray="1 1"/>
<rect x="33.5" y="398.5" width="8" height="8" fill="#fff" stroke="#909098"/>
<rect x="35" y="402" width="5" height="1" fill="#000"/>
<rect x="37" y="400" width="1" height="5" fill="#000"/>
<circle cx="54.5" cy="402.5" r="4.6" fill="#F07878" shape-rendering="auto"/>
<rect x="60" y="395" width="4" height="14" rx="2" fill="#F07070" shape-rendering="auto"/>
<path d="M42 418.5H50" stroke="#A0A0A0" stroke-dasharray="1 1"/>
<rect x="33.5" y="414.5" width="8" height="8" fill="#fff" stroke="#909098"/>
<rect x="35" y="418" width="5" height="1" fill="#000"/>
<rect x="37" y="416" width="1" height="5" fill="#000"/>
<circle cx="54.5" cy="418.5" r="4.6" fill="#F078F0" shape-rendering="auto"/>
<rect x="60" y="411" width="4" height="14" rx="2" fill="#F070F0" shape-rendering="auto"/>
<path d="M42 434.5H50" stroke="#A0A0A0" stroke-dasharray="1 1"/>
<rect x="33.5" y="430.5" width="8" height="8" fill="#fff" stroke="#909098"/>
<rect x="35" y="434" width="5" height="1" fill="#000"/>
<rect x="37" y="432" width="1" height="5" fill="#000"/>
<circle cx="54.5" cy="434.5" r="4.6" fill="#F0F000" shape-rendering="auto"/>
<rect x="60" y="427" width="4" height="14" rx="2" fill="#F0F000" shape-rendering="auto"/>
<path d="M42 450.5H50" stroke="#A0A0A0" stroke-dasharray="1 1"/>
<rect x="33.5" y="446.5" width="8" height="8" fill="#fff" stroke="#909098"/>
<rect x="35" y="450" width="5" height="1" fill="#000"/>
<rect x="37" y="448" width="1" height="5" fill="#000"/>
<circle cx="54.5" cy="450.5" r="4.6" fill="#C4C4C4" shape-rendering="auto"/>
<rect x="60" y="443" width="4" height="14" rx="2" fill="#0000E0" shape-rendering="auto"/>
<path d="M42 466.5H50" stroke="#A0A0A0" stroke-dasharray="1 1"/>
<rect x="33.5" y="462.5" width="8" height="8" fill="#fff" stroke="#909098"/>
<rect x="35" y="466" width="5" height="1" fill="#000"/>
<rect x="37" y="464" width="1" height="5" fill="#000"/>
<circle cx="54.5" cy="466.5" r="4.6" fill="#C4C4C4" shape-rendering="auto"/>
<rect x="60" y="459" width="4" height="14" rx="2" fill="#20D020" shape-rendering="auto"/>
<path d="M42 482.5H50" stroke="#A0A0A0" stroke-dasharray="1 1"/>
<rect x="33.5" y="478.5" width="8" height="8" fill="#fff" stroke="#909098"/>
<rect x="35" y="482" width="5" height="1" fill="#000"/>
<rect x="37" y="480" width="1" height="5" fill="#000"/>
<circle cx="54.5" cy="482.5" r="4.6" fill="#C4C4C4" shape-rendering="auto"/>
<rect x="60" y="475" width="4" height="14" rx="2" fill="#40F0F0" shape-rendering="auto"/>
<path d="M42 498.5H50" stroke="#A0A0A0" stroke-dasharray="1 1"/>
<rect x="33.5" y="494.5" width="8" height="8" fill="#fff" stroke="#909098"/>
<rect x="35" y="498" width="5" height="1" fill="#000"/>
<rect x="37" y="496" width="1" height="5" fill="#000"/>
<circle cx="54.5" cy="498.5" r="4.6" fill="#F00000" shape-rendering="auto"/>
<rect x="60" y="491" width="4" height="14" rx="2" fill="#F00000" shape-rendering="auto"/>
<path d="M42 514.5H50" stroke="#A0A0A0" stroke-dasharray="1 1"/>
<rect x="33.5" y="510.5" width="8" height="8" fill="#fff" stroke="#909098"/>
<rect x="35" y="514" width="5" height="1" fill="#000"/>
<rect x="37" y="512" width="1" height="5" fill="#000"/>
<circle cx="54.5" cy="514.5" r="4.6" fill="#C4C4C4" shape-rendering="auto"/>
<rect x="60" y="507" width="4" height="14" rx="2" fill="#F000F0" shape-rendering="auto"/>
<path d="M42 530.5H50" stroke="#A0A0A0" stroke-dasharray="1 1"/>
<rect x="33.5" y="526.5" width="8" height="8" fill="#fff" stroke="#909098"/>
<rect x="35" y="530" width="5" height="1" fill="#000"/>
<rect x="37" y="528" width="1" height="5" fill="#000"/>
<circle cx="54.5" cy="530.5" r="4.6" fill="#C4C4C4" shape-rendering="auto"/>
<rect x="60" y="523" width="4" height="14" rx="2" fill="#F8F880" shape-rendering="auto"/>
<path d="M42 546.5H50" stroke="#A0A0A0" stroke-dasharray="1 1"/>
<rect x="33.5" y="542.5" width="8" height="8" fill="#fff" stroke="#909098"/>
<rect x="35" y="546" width="5" height="1" fill="#000"/>
<rect x="37" y="544" width="1" height="5" fill="#000"/>
<circle cx="54.5" cy="546.5" r="4.6" fill="#C4C4C4" shape-rendering="auto"/>
<rect x="60" y="539" width="4" height="14" rx="2" fill="#7070F0" shape-rendering="auto"/>
<path d="M42 562.5H50" stroke="#A0A0A0" stroke-dasharray="1 1"/>
<rect x="33.5" y="558.5" width="8" height="8" fill="#fff" stroke="#909098"/>
<rect x="35" y="562" width="5" height="1" fill="#000"/>
<rect x="37" y="560" width="1" height="5" fill="#000"/>
<circle cx="54.5" cy="562.5" r="4.6" fill="#70F070" shape-rendering="auto"/>
<rect x="60" y="555" width="4" height="14" rx="2" fill="#60E060" shape-rendering="auto"/>
<path d="M42 578.5H50" stroke="#A0A0A0" stroke-dasharray="1 1"/>
<rect x="33.5" y="574.5" width="8" height="8" fill="#fff" stroke="#909098"/>
<rect x="35" y="578" width="5" height="1" fill="#000"/>
<rect x="37" y="576" width="1" height="5" fill="#000"/>
<circle cx="54.5" cy="578.5" r="4.6" fill="#C4C4C4" shape-rendering="auto"/>
<rect x="60" y="571" width="4" height="14" rx="2" fill="#80F0F0" shape-rendering="auto"/>
<path d="M42 594.5H50" stroke="#A0A0A0" stroke-dasharray="1 1"/>
<rect x="33.5" y="590.5" width="8" height="8" fill="#fff" stroke="#909098"/>
<rect x="35" y="594" width="5" height="1" fill="#000"/>
<rect x="37" y="592" width="1" height="5" fill="#000"/>
<circle cx="54.5" cy="594.5" r="4.6" fill="#F07070" shape-rendering="auto"/>
<rect x="60" y="587" width="4" height="14" rx="2" fill="#F07070" shape-rendering="auto"/>
<path d="M42 610.5H50" stroke="#A0A0A0" stroke-dasharray="1 1"/>
<rect x="33.5" y="606.5" width="8" height="8" fill="#fff" stroke="#909098"/>
<rect x="35" y="610" width="5" height="1" fill="#000"/>
<rect x="37" y="608" width="1" height="5" fill="#000"/>
<circle cx="54.5" cy="610.5" r="4.6" fill="#C4C4C4" shape-rendering="auto"/>
<rect x="60" y="603" width="4" height="14" rx="2" fill="#F080F0" shape-rendering="auto"/>
<path d="M22 626.5H30" stroke="#A0A0A0" stroke-dasharray="1 1"/>
<circle cx="34.5" cy="626.5" r="4.6" fill="#C4C4C4" shape-rendering="auto"/>
<rect x="40" y="619" width="4" height="14" rx="2" fill="#C4C4C8" shape-rendering="auto"/>
<path d="M22 642.5H30" stroke="#A0A0A0" stroke-dasharray="1 1"/>
<rect x="13.5" y="638.5" width="8" height="8" fill="#fff" stroke="#909098"/>
<rect x="15" y="642" width="5" height="1" fill="#000"/>
<rect x="17" y="640" width="1" height="5" fill="#000"/>
<text x="26" y="646" font-family="Liberation Sans" font-weight="bold" font-size="12" fill="#C0C0C8" shape-rendering="auto">A</text>
<text x="28" y="647" font-family="Liberation Sans" font-weight="bold" font-size="12" fill="#208080" shape-rendering="auto">A</text>
<text x="31" y="650" font-family="Liberation Sans" font-weight="bold" font-size="12" fill="#0000C0" shape-rendering="auto">A</text>
<path d="M22 658.5H30" stroke="#A0A0A0" stroke-dasharray="1 1"/>
<rect x="13.5" y="654.5" width="8" height="8" fill="#fff" stroke="#909098"/>
<rect x="15" y="658" width="5" height="1" fill="#000"/>
<rect x="17" y="656" width="1" height="5" fill="#000"/>
<text x="26" y="662" font-family="Liberation Sans" font-weight="bold" font-size="12" fill="#C0C0C8" shape-rendering="auto">R</text>
<text x="28" y="663" font-family="Liberation Sans" font-weight="bold" font-size="12" fill="#208080" shape-rendering="auto">R</text>
<text x="31" y="666" font-family="Liberation Sans" font-weight="bold" font-size="12" fill="#0000C0" shape-rendering="auto">R</text>
<path d="M22 674.5H30" stroke="#A0A0A0" stroke-dasharray="1 1"/>
<text x="26" y="678" font-family="Liberation Sans" font-weight="bold" font-size="12" fill="#C0C0C8" shape-rendering="auto">P</text>
<text x="28" y="679" font-family="Liberation Sans" font-weight="bold" font-size="12" fill="#208080" shape-rendering="auto">P</text>
<text x="31" y="682" font-family="Liberation Sans" font-weight="bold" font-size="12" fill="#0000C0" shape-rendering="auto">P</text>
</svg>
<div class="a tr" style="left:calc(-9px + 51.5px);top:calc(-361px + 363px)">Hole/Rout Layers</div>
<div class="a tr" style="left:calc(-9px + 51.5px);top:calc(-361px + 379px)">Physical Layers</div>
<div class="a tr" style="left:calc(-9px + 71.5px);top:calc(-361px + 395px)">(h) P1 Unknown</div>
<div class="a tr" style="left:calc(-9px + 71.5px);top:calc(-361px + 411px)">(h) P2 Unknown</div>
<div class="a tr" style="left:calc(-9px + 71.5px);top:calc(-361px + 427px)">(h) P3 Unknown</div>
<div class="a tr" style="left:calc(-9px + 71.5px);top:calc(-361px + 443px)">(h) P4 Unknown</div>
<div class="a tr" style="left:calc(-9px + 71.5px);top:calc(-361px + 459px)">(h) P5 Unknown</div>
<div class="a tr" style="left:calc(-9px + 71.5px);top:calc(-361px + 475px)">(h) P6 Unknown</div>
<div class="a tr" style="left:calc(-9px + 71.5px);top:calc(-361px + 491px)">(h) P7 Unknown</div>
<div class="a tr" style="left:calc(-9px + 71.5px);top:calc(-361px + 507px)">(h) P8 Unknown</div>
<div class="a tr" style="left:calc(-9px + 71.5px);top:calc(-361px + 523px)">(v) P9 Unknown</div>
<div class="a tr" style="left:calc(-9px + 71.5px);top:calc(-361px + 539px)">(h) P10 Unknown</div>
<div class="a tr" style="left:calc(-9px + 71.5px);top:calc(-361px + 555px)">(h) P11 Unknown</div>
<div class="a tr" style="left:calc(-9px + 71.5px);top:calc(-361px + 571px)">(h) P12 Unknown</div>
<div class="a tr" style="left:calc(-9px + 71.5px);top:calc(-361px + 587px)">(h) P13 Unknown</div>
<div class="a tr" style="left:calc(-9px + 71.5px);top:calc(-361px + 603px)">(h) P14 Unknown</div>
<div class="a tr" style="left:calc(-9px + 51.5px);top:calc(-361px + 619px)">Unassigned Layers</div>
<div class="a tr" style="left:calc(-9px + 51.5px);top:calc(-361px + 635px)">Aperture Tables</div>
<div class="a tr" style="left:calc(-9px + 51.5px);top:calc(-361px + 651px)">Drill Tables</div>
<div class="a tr" style="left:calc(-9px + 51.5px);top:calc(-361px + 667px)">Probe Tables</div></div>

<!-- scrollbars -->
<div class="a" style="left:1077px;top:84px;width:19px;height:676px;background:linear-gradient(90deg,#F4F4F8,#FBFBFD 40%,#F0F0F4)"></div>
<div class="a" style="left:162px;top:759px;width:934px;height:17px;background:linear-gradient(#F4F4F8,#FCFCFE 50%,#EEEEF2)"></div>
<div class="a" style="left:1077px;top:759px;width:19px;height:17px;background:#E6E6EA"></div>
<div class="a sbtn" style="left:1078px;top:84px"><svg width="15" height="15" class="a" style="left:0;top:0"><path d="M3.5 9L7.5 5L11.5 9" stroke="#4D5060" stroke-width="2" fill="none"/></svg></div>
<div class="a sbtn" style="left:1078px;top:742px"><svg width="15" height="15" class="a" style="left:0;top:0"><path d="M3.5 5.5L7.5 9.5L11.5 5.5" stroke="#4D5060" stroke-width="2" fill="none"/></svg></div>
<div class="a sbtn" style="left:163px;top:760px"><svg width="15" height="15" class="a" style="left:0;top:0"><path d="M9 3.5L5 7.5L9 11.5" stroke="#4D5060" stroke-width="2" fill="none"/></svg></div>
<div class="a sbtn" style="left:1060px;top:760px"><svg width="15" height="15" class="a" style="left:0;top:0"><path d="M6 3.5L10 7.5L6 11.5" stroke="#4D5060" stroke-width="2" fill="none"/></svg></div>
<div class="a sbtn" style="left:1078px;top:369px;height:21px"><svg width="15" height="19" class="a" style="left:0;top:0"><path d="M4 7.5H11M4 9.5H11M4 11.5H11M4 13.5H11" stroke="#8088A0" fill="none"/></svg></div>
<div class="a sbtn" style="left:673px;top:760px;width:40px"><svg width="38" height="15" class="a" style="left:0;top:0"><path d="M16.5 4V11M18.5 4V11M20.5 4V11M22.5 4V11" stroke="#707080" fill="none"/></svg></div>
<!-- tree hscroll -->

<svg class="a" style="left:0;top:0" width="162" height="800" shape-rendering="crispEdges">
<defs><pattern id="chk2" width="2" height="2" patternUnits="userSpaceOnUse"><rect width="2" height="2" fill="#F6F6F8"/><rect width="1" height="1" fill="#E0E0E4"/><rect x="1" y="1" width="1" height="1" fill="#E0E0E4"/></pattern>
<g id="cbtn"><rect x="0" y="0" width="16" height="16" fill="#E0DFE3"/><path d="M0.5 15.5V0.5H15.5" stroke="#fff" fill="none"/><path d="M0.5 15.5H15.5V0.5" stroke="#808080" fill="none"/><path d="M1.5 14.5H14.5V1.5" stroke="#A0A0A8" fill="none"/></g></defs>
<rect x="9" y="759" width="141" height="17" fill="url(#chk2)"/>
<use href="#cbtn" x="9" y="759"/>
<path d="M18 763V771L14 767Z" fill="#000"/>
<rect x="26" y="759" width="90" height="17" fill="#E0DFE3"/><path d="M26.5 775.5V759.5H115.5" stroke="#fff" fill="none"/><path d="M26.5 775.5H115.5V759.5" stroke="#808080" fill="none"/>
<use href="#cbtn" x="134" y="759"/>
<path d="M141 763V771L145 767Z" fill="#000"/>
</svg>
<!-- status bar -->
<div class="a" style="left:4px;top:776px;width:1092px;height:1px;background:#C8C8D0"></div>
<div class="a" style="left:5.5px;top:781.5px;font-size:11px;color:#202020">Ready</div>
<div class="a" style="left:1057px;top:778px;width:8px;height:18px;border:1px solid #B8B8C0;border-right-color:#fff;border-bottom-color:#fff"></div>
<div class="a" style="left:1068px;top:778px;width:8px;height:18px;border:1px solid #B8B8C0;border-right-color:#fff;border-bottom-color:#fff"></div>
<svg class="a" style="left:1082px;top:782px" width="14" height="14"><path d="M13 3L3 13M13 7L7 13M13 11L11 13" stroke="#A0A0A8" stroke-width="1.2"/><path d="M13 4L4 13M13 8L8 13" stroke="#fff"/></svg>

</body></html>
